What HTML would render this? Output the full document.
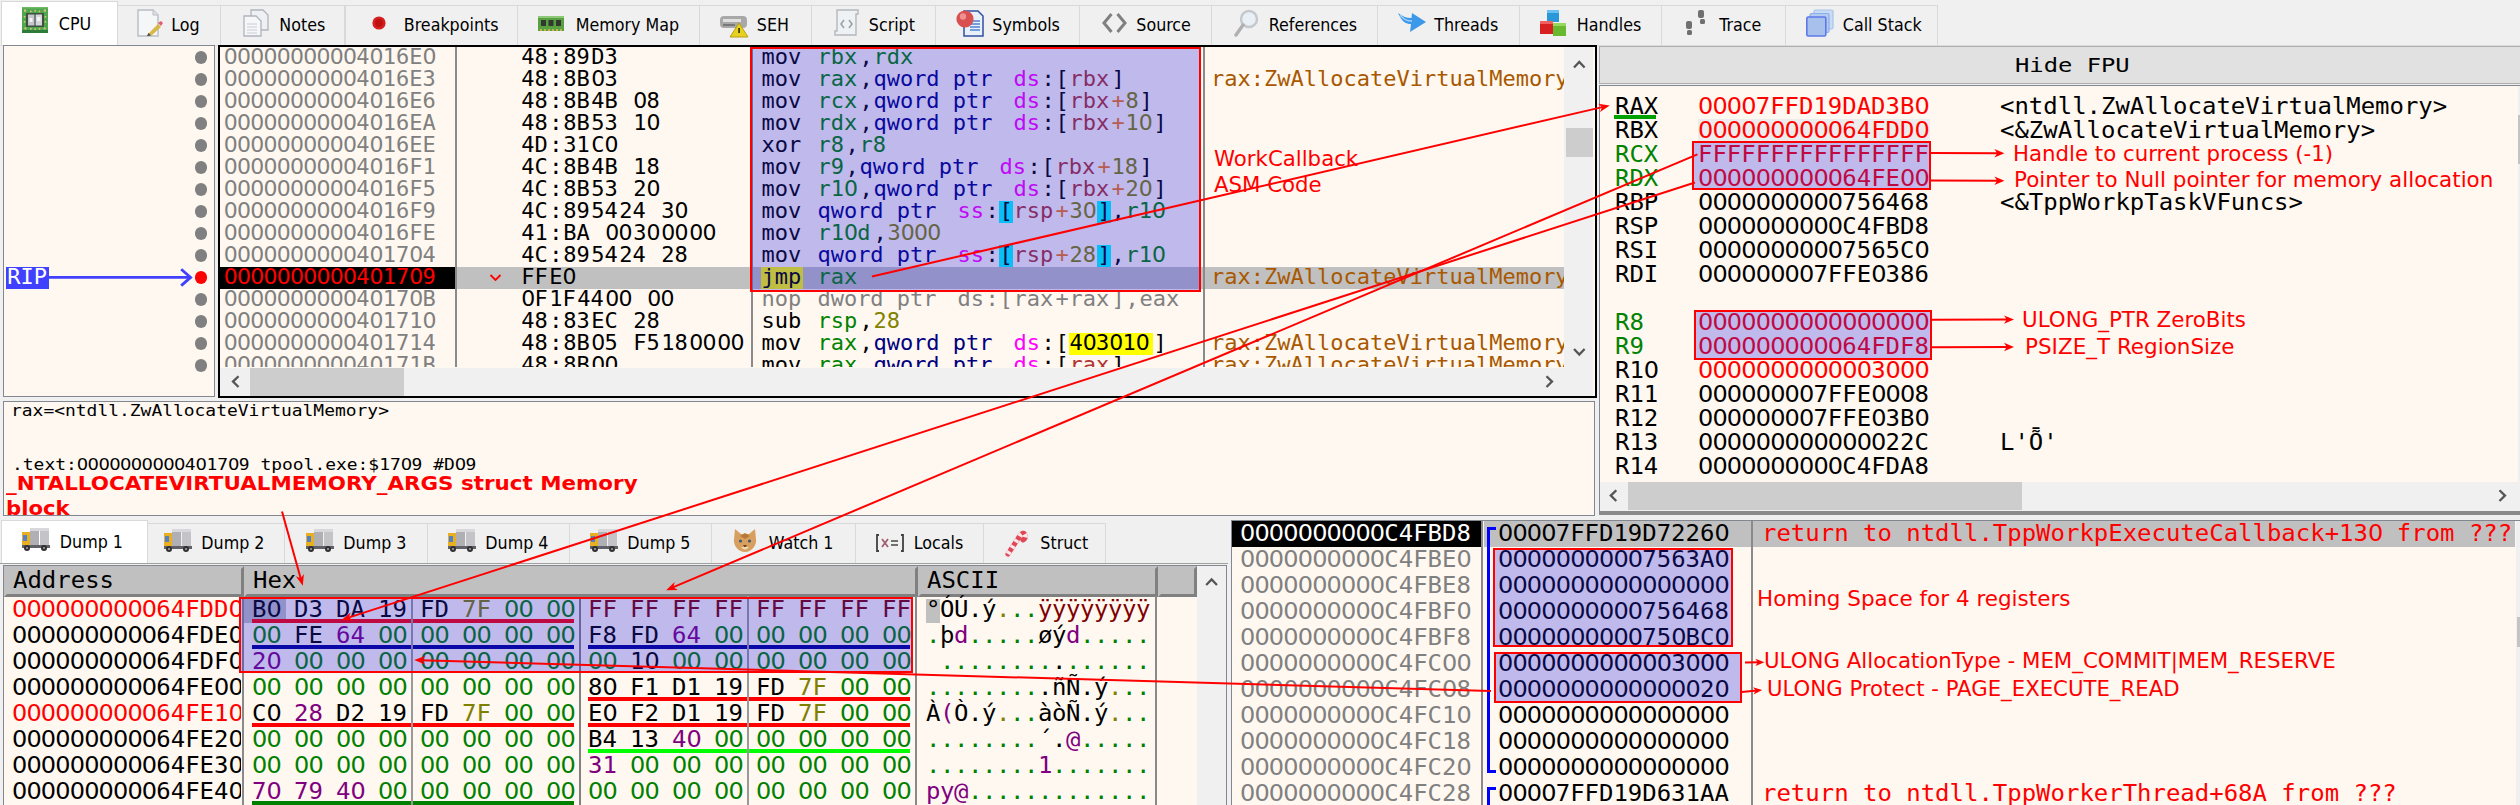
<!DOCTYPE html>
<html lang="en"><head><meta charset="utf-8"><title>x64dbg - tpool.exe</title>
<style>
html,body{margin:0;padding:0;}
body{width:2520px;height:805px;overflow:hidden;position:relative;background:#f0f0f0;}
#root{position:absolute;left:0;top:0;width:2520px;height:805px;overflow:hidden;background:#f0f0f0;}
#root div{position:absolute;box-sizing:border-box;}
.t{position:absolute;white-space:pre;transform-origin:0 50%;display:block;}
.m{font-family:"DejaVu Sans Mono","Liberation Mono",monospace;}
.s{font-family:"DejaVu Sans","Liberation Sans",sans-serif;}
.c{font-family:"DejaVu Sans Condensed","DejaVu Sans","Liberation Sans",sans-serif;font-stretch:condensed;}
.z{font-family:"DejaVu Sans","DejaVu Sans Mono",monospace;letter-spacing:-0.03418em;}
.clip{overflow:hidden;}
svg{position:absolute;left:0;top:0;}
</style></head><body><div id="root">

<div style="left:1.1px;top:1px;width:116.5px;height:44px;background:#ffffff;border:1px solid #d9d9d9;border-bottom:none;"></div>
<span class="t c " style="left:58.8px;top:14.38px;height:21px;line-height:21px;font-size:17.7px;color:#000;">CPU</span>
<svg style="left:22px;top:7px" width="30" height="30" viewBox="0 0 30 30"><rect x="0" y="0" width="26" height="26" rx="1" fill="#4fa64c"/><rect x="0" y="23" width="26" height="3" fill="#2f7c3a"/><rect x="0" y="0" width="26" height="1.5" fill="#6cba62"/><rect x="4" y="6" width="18" height="14" fill="#3e5040"/><rect x="6" y="7.5" width="6.4" height="11" fill="#c4c6cc"/><rect x="13.6" y="7.5" width="6.4" height="11" fill="#d4d6da"/><rect x="7.5" y="11" width="3" height="4" fill="#f4f4f4"/><rect x="15" y="10" width="3.4" height="4" fill="#f4f4f4"/><g fill="#d8c47c"><rect x="2" y="2.5" width="2.2" height="2.2"/><rect x="21.8" y="2.5" width="2.2" height="2.2"/><rect x="2.4" y="20.4" width="2" height="2"/><rect x="21.6" y="20.4" width="2" height="2"/><rect x="8" y="3.6" width="1.6" height="1.6"/><rect x="12.4" y="3" width="1.6" height="1.6"/><rect x="16.6" y="3.6" width="1.6" height="1.6"/><rect x="8" y="21" width="1.6" height="1.6"/><rect x="12.4" y="21.4" width="1.6" height="1.6"/><rect x="16.6" y="21" width="1.6" height="1.6"/><rect x="1.8" y="9" width="1.6" height="1.6"/><rect x="1.8" y="14" width="1.6" height="1.6"/><rect x="22.6" y="9" width="1.6" height="1.6"/><rect x="22.6" y="14" width="1.6" height="1.6"/></g></svg>
<div style="left:116.6px;top:5px;width:104.8px;height:40px;background:#f0f0f0;border:1px solid #d9d9d9;border-bottom:none;"></div>
<span class="t c " style="left:171.3px;top:15.38px;height:21px;line-height:21px;font-size:17.7px;color:#000;">Log</span>
<svg style="left:136px;top:8px" width="30" height="30" viewBox="0 0 30 30"><path d="M2 2H17L22 7V28H2Z" fill="#f4f6f8" stroke="#b8bcc4" stroke-width="1.4"/><path d="M17 2V7H22" fill="#dfe3e8" stroke="#b8bcc4" stroke-width="1"/><path d="M12 26L22 16L25 19L15 28Z" fill="#d8b848"/><path d="M22 15l3-2 2 2-2 3z" fill="#e06070"/><path d="M11 28l1.5-3 2.5 2.5z" fill="#404040"/></svg>
<div style="left:220.4px;top:5px;width:125.1px;height:40px;background:#f0f0f0;border:1px solid #d9d9d9;border-bottom:none;"></div>
<span class="t c " style="left:279.3px;top:15.38px;height:21px;line-height:21px;font-size:17.7px;color:#000;">Notes</span>
<svg style="left:243px;top:8px" width="30" height="30" viewBox="0 0 30 30"><path d="M8 2H20L25 7V22H8Z" fill="#eef0f4" stroke="#b0b4bc" stroke-width="1.3"/><path d="M1 8H13L18 13V28H1Z" fill="#f6f7f9" stroke="#b0b4bc" stroke-width="1.3"/><g stroke="#c8ccd6" stroke-width="1"><path d="M4 16H14M4 19H14M4 22H14M4 25H14"/></g></svg>
<div style="left:344.5px;top:5px;width:173.1px;height:40px;background:#f0f0f0;border:1px solid #d9d9d9;border-bottom:none;"></div>
<span class="t c " style="left:403.8px;top:15.38px;height:21px;line-height:21px;font-size:17.7px;color:#000;">Breakpoints</span>
<svg style="left:370px;top:8px" width="30" height="30" viewBox="0 0 30 30"><circle cx="9" cy="15" r="6.6" fill="#d42020"/><circle cx="9" cy="15" r="4" fill="#c01010"/></svg>
<div style="left:516.6px;top:5px;width:183px;height:40px;background:#f0f0f0;border:1px solid #d9d9d9;border-bottom:none;"></div>
<span class="t c " style="left:575.8px;top:15.38px;height:21px;line-height:21px;font-size:17.7px;color:#000;">Memory Map</span>
<svg style="left:538px;top:8px" width="30" height="30" viewBox="0 0 30 30"><rect x="0" y="8" width="26" height="15" fill="#58a040"/><rect x="0" y="8" width="26" height="2" fill="#8cc878"/><g fill="#303830"><rect x="3" y="12" width="5" height="6"/><rect x="10.5" y="12" width="5" height="6"/><rect x="18" y="12" width="5" height="6"/></g><g fill="#c8b050"><rect x="2" y="21" width="2" height="2"/><rect x="6" y="21" width="2" height="2"/><rect x="10" y="21" width="2" height="2"/><rect x="14" y="21" width="2" height="2"/><rect x="18" y="21" width="2" height="2"/><rect x="22" y="21" width="2" height="2"/></g></svg>
<div style="left:698.6px;top:5px;width:113px;height:40px;background:#f0f0f0;border:1px solid #d9d9d9;border-bottom:none;"></div>
<span class="t c " style="left:756.8px;top:15.38px;height:21px;line-height:21px;font-size:17.7px;color:#000;">SEH</span>
<svg style="left:720px;top:8px" width="30" height="30" viewBox="0 0 30 30"><rect x="0" y="8" width="27" height="12" rx="4" fill="#a8a8a8"/><rect x="3" y="11" width="18" height="3" fill="#e0e0e0"/><rect x="3" y="16" width="12" height="2" fill="#787878"/><path d="M19 15L28 29H10Z" fill="#e8d020" stroke="#b8a010" stroke-width="1"/><rect x="18.2" y="20" width="1.8" height="5" fill="#404000"/></svg>
<div style="left:810.6px;top:5px;width:125px;height:40px;background:#f0f0f0;border:1px solid #d9d9d9;border-bottom:none;"></div>
<span class="t c " style="left:868.8px;top:15.38px;height:21px;line-height:21px;font-size:17.7px;color:#000;">Script</span>
<svg style="left:833px;top:8px" width="30" height="30" viewBox="0 0 30 30"><path d="M4 2H25V6H23V27H2V23H4Z" fill="#eef2f4" stroke="#b4b8bc" stroke-width="1.4"/><g stroke="#9aa4a8" stroke-width="1.6" fill="none"><path d="M11 12L8 16L11 20"/><path d="M16 12L19 16L16 20"/></g></svg>
<div style="left:934.6px;top:5px;width:145px;height:40px;background:#f0f0f0;border:1px solid #d9d9d9;border-bottom:none;"></div>
<span class="t c " style="left:992.3px;top:15.38px;height:21px;line-height:21px;font-size:17.7px;color:#000;">Symbols</span>
<svg style="left:956px;top:8px" width="30" height="30" viewBox="0 0 30 30"><path d="M8 3H22L27 8V28H8Z" fill="#e8f0fc" stroke="#3050a0" stroke-width="1.5"/><g stroke="#5080d0" stroke-width="1.3"><path d="M14 13H24M14 16H24M14 19H24M14 22H24"/></g><circle cx="9" cy="11" r="8.6" fill="#d85050"/><circle cx="7" cy="8.5" r="3.2" fill="#f09090"/></svg>
<div style="left:1078.6px;top:5px;width:133px;height:40px;background:#f0f0f0;border:1px solid #d9d9d9;border-bottom:none;"></div>
<span class="t c " style="left:1136.3px;top:15.38px;height:21px;line-height:21px;font-size:17.7px;color:#000;">Source</span>
<svg style="left:1102px;top:8px" width="30" height="30" viewBox="0 0 30 30"><g stroke="#808080" stroke-width="3" fill="none"><path d="M9.5 6L2 15L9.5 24"/><path d="M15.5 6L23 15L15.5 24"/></g></svg>
<div style="left:1210.6px;top:5px;width:167px;height:40px;background:#f0f0f0;border:1px solid #d9d9d9;border-bottom:none;"></div>
<span class="t c " style="left:1268.8px;top:15.38px;height:21px;line-height:21px;font-size:17.7px;color:#000;">References</span>
<svg style="left:1234px;top:8px" width="30" height="30" viewBox="0 0 30 30"><circle cx="15" cy="11" r="8" fill="#e8f0f6" stroke="#c4c8cc" stroke-width="2.4"/><path d="M9 17L2 27" stroke="#b0b0b0" stroke-width="3.4" stroke-linecap="round"/></svg>
<div style="left:1376.6px;top:5px;width:143px;height:40px;background:#f0f0f0;border:1px solid #d9d9d9;border-bottom:none;"></div>
<span class="t c " style="left:1434.3px;top:15.38px;height:21px;line-height:21px;font-size:17.7px;color:#000;">Threads</span>
<svg style="left:1398px;top:8px" width="30" height="30" viewBox="0 0 30 30"><path d="M0 5C4 14 8 16 13 16L12 24L28 14L14 5L13.5 10C8 10 4 8 0 5Z" fill="#3c98e8"/><path d="M2 7C6 12 9 13 14 13" stroke="#a0d0f8" stroke-width="1.5" fill="none"/></svg>
<div style="left:1518.6px;top:5px;width:143px;height:40px;background:#f0f0f0;border:1px solid #d9d9d9;border-bottom:none;"></div>
<span class="t c " style="left:1576.8px;top:15.38px;height:21px;line-height:21px;font-size:17.7px;color:#000;">Handles</span>
<svg style="left:1540px;top:8px" width="30" height="30" viewBox="0 0 30 30"><rect x="7" y="2" width="12" height="12" fill="#2898d8"/><rect x="7" y="2" width="12" height="3" fill="#68c0f0"/><rect x="0" y="13" width="13" height="13" fill="#d82020"/><rect x="0" y="13" width="13" height="3" fill="#f06060"/><rect x="13" y="15" width="13" height="13" fill="#68b830"/><rect x="13" y="15" width="13" height="3" fill="#98d860"/></svg>
<div style="left:1660.6px;top:5px;width:125px;height:40px;background:#f0f0f0;border:1px solid #d9d9d9;border-bottom:none;"></div>
<span class="t c " style="left:1719.3px;top:15.38px;height:21px;line-height:21px;font-size:17.7px;color:#000;">Trace</span>
<svg style="left:1683px;top:8px" width="30" height="30" viewBox="0 0 30 30"><g fill="#707070"><rect x="15" y="2" width="6" height="8" rx="2"/><rect x="17" y="11" width="5" height="5" rx="1.5"/><rect x="3" y="13" width="6" height="8" rx="2"/><rect x="4" y="22" width="5" height="5" rx="1.5"/></g></svg>
<div style="left:1784.6px;top:5px;width:153px;height:40px;background:#f0f0f0;border:1px solid #d9d9d9;border-bottom:none;"></div>
<span class="t c " style="left:1842.8px;top:15.38px;height:21px;line-height:21px;font-size:17.7px;color:#000;">Call Stack</span>
<svg style="left:1806px;top:8px" width="30" height="30" viewBox="0 0 30 30"><rect x="8" y="2" width="19" height="19" rx="1.5" fill="#c8dcf4" stroke="#a8c4ec" stroke-width="1.2"/><rect x="4" y="5.5" width="19" height="19" rx="1.5" fill="#b4ccf0" stroke="#8cacec" stroke-width="1.2"/><rect x="0.8" y="9" width="19" height="19" rx="1.5" fill="#a8c0ec" stroke="#5c78e8" stroke-width="1.6"/></svg>
<div style="left:0px;top:44.5px;width:2520px;height:1px;background:#dcdcdc;"></div>
<div style="left:2.5px;top:44.8px;width:212.5px;height:352.7px;background:#fff8f0;border:1px solid #828790;"></div>
<div style="left:194.8px;top:51.3px;width:12.4px;height:12.4px;background:#808080;border-radius:50%;"></div>
<div style="left:194.8px;top:73.3px;width:12.4px;height:12.4px;background:#808080;border-radius:50%;"></div>
<div style="left:194.8px;top:95.3px;width:12.4px;height:12.4px;background:#808080;border-radius:50%;"></div>
<div style="left:194.8px;top:117.3px;width:12.4px;height:12.4px;background:#808080;border-radius:50%;"></div>
<div style="left:194.8px;top:139.3px;width:12.4px;height:12.4px;background:#808080;border-radius:50%;"></div>
<div style="left:194.8px;top:161.3px;width:12.4px;height:12.4px;background:#808080;border-radius:50%;"></div>
<div style="left:194.8px;top:183.3px;width:12.4px;height:12.4px;background:#808080;border-radius:50%;"></div>
<div style="left:194.8px;top:205.3px;width:12.4px;height:12.4px;background:#808080;border-radius:50%;"></div>
<div style="left:194.8px;top:227.3px;width:12.4px;height:12.4px;background:#808080;border-radius:50%;"></div>
<div style="left:194.8px;top:249.3px;width:12.4px;height:12.4px;background:#808080;border-radius:50%;"></div>
<div style="left:194.8px;top:271.3px;width:12.4px;height:12.4px;background:#ff0000;border-radius:50%;"></div>
<div style="left:194.8px;top:293.3px;width:12.4px;height:12.4px;background:#808080;border-radius:50%;"></div>
<div style="left:194.8px;top:315.3px;width:12.4px;height:12.4px;background:#808080;border-radius:50%;"></div>
<div style="left:194.8px;top:337.3px;width:12.4px;height:12.4px;background:#808080;border-radius:50%;"></div>
<div style="left:194.8px;top:359.3px;width:12.4px;height:12.4px;background:#808080;border-radius:50%;"></div>
<div style="left:5.5px;top:266.5px;width:43.5px;height:22px;background:#4040ff;"></div>
<span class="t m " style="left:7.2px;top:264.39px;height:26px;line-height:26px;font-size:22px;color:#fff;">RIP</span>
<svg width="220" height="400" viewBox="0 0 220 400"><g stroke="#4040ff" stroke-width="2.8" fill="none"><path d="M49 277.4H190"/><path d="M181.2 269.2L190.6 277.4L181.2 285.6"/></g></svg>
<div style="left:218px;top:45px;width:1379px;height:353.2px;background:#fff8f0;border:2px solid #000;"></div>
<div class="clip" style="left:220px;top:46.5px;width:1344.2px;height:320.4px;">
<span class="t m " style="left:3.8px;top:-0.56px;height:22px;line-height:22px;font-size:22px;color:#808080;"><span class="z">0000000000</span>4<span class="z">0</span>16E<span class="z">0</span></span>
<span class="t m " style="left:301.2px;top:-0.56px;height:22px;line-height:22px;font-size:22px;color:#000000;">48</span>
<span class="t m " style="left:329.2px;top:-0.56px;height:22px;line-height:22px;font-size:22px;color:#000000;">:</span>
<span class="t m " style="left:343.2px;top:-0.56px;height:22px;line-height:22px;font-size:22px;color:#000000;">89</span>
<span class="t m " style="left:371.2px;top:-0.56px;height:22px;line-height:22px;font-size:22px;color:#000000;">D3</span>
<span class="t m " style="left:541.4px;top:-0.56px;height:22px;line-height:22px;font-size:22px;color:#000000;">mov </span>
<span class="t m " style="left:597.4px;top:-0.56px;height:22px;line-height:22px;font-size:22px;color:#008300;">rbx</span>
<span class="t m " style="left:639.4px;top:-0.56px;height:22px;line-height:22px;font-size:22px;color:#000000;">,</span>
<span class="t m " style="left:653.4px;top:-0.56px;height:22px;line-height:22px;font-size:22px;color:#008300;">rdx</span>
<span class="t m " style="left:3.8px;top:21.44px;height:22px;line-height:22px;font-size:22px;color:#808080;"><span class="z">0000000000</span>4<span class="z">0</span>16E3</span>
<span class="t m " style="left:301.2px;top:21.44px;height:22px;line-height:22px;font-size:22px;color:#000000;">48</span>
<span class="t m " style="left:329.2px;top:21.44px;height:22px;line-height:22px;font-size:22px;color:#000000;">:</span>
<span class="t m " style="left:343.2px;top:21.44px;height:22px;line-height:22px;font-size:22px;color:#000000;">8B</span>
<span class="t m " style="left:371.2px;top:21.44px;height:22px;line-height:22px;font-size:22px;color:#000000;"><span class="z">0</span>3</span>
<span class="t m " style="left:541.4px;top:21.44px;height:22px;line-height:22px;font-size:22px;color:#000000;">mov </span>
<span class="t m " style="left:597.4px;top:21.44px;height:22px;line-height:22px;font-size:22px;color:#008300;">rax</span>
<span class="t m " style="left:639.4px;top:21.44px;height:22px;line-height:22px;font-size:22px;color:#000000;">,</span>
<span class="t m " style="left:653.4px;top:21.44px;height:22px;line-height:22px;font-size:22px;color:#000080;">qword ptr</span>
<span class="t m " style="left:793.4px;top:21.44px;height:22px;line-height:22px;font-size:22px;color:#ff00ff;">ds</span>
<span class="t m " style="left:821.4px;top:21.44px;height:22px;line-height:22px;font-size:22px;color:#000000;">:</span>
<span class="t m " style="left:835.4px;top:21.44px;height:22px;line-height:22px;font-size:22px;color:#000000;">[</span>
<span class="t m " style="left:849.4px;top:21.44px;height:22px;line-height:22px;font-size:22px;color:#b03434;">rbx</span>
<span class="t m " style="left:891.4px;top:21.44px;height:22px;line-height:22px;font-size:22px;color:#000000;">]</span>
<span class="t m " style="left:991px;top:21.44px;height:22px;line-height:22px;font-size:22px;color:#a85800;">rax:ZwAllocateVirtualMemory</span>
<span class="t m " style="left:3.8px;top:43.44px;height:22px;line-height:22px;font-size:22px;color:#808080;"><span class="z">0000000000</span>4<span class="z">0</span>16E6</span>
<span class="t m " style="left:301.2px;top:43.44px;height:22px;line-height:22px;font-size:22px;color:#000000;">48</span>
<span class="t m " style="left:329.2px;top:43.44px;height:22px;line-height:22px;font-size:22px;color:#000000;">:</span>
<span class="t m " style="left:343.2px;top:43.44px;height:22px;line-height:22px;font-size:22px;color:#000000;">8B</span>
<span class="t m " style="left:371.2px;top:43.44px;height:22px;line-height:22px;font-size:22px;color:#000000;">4B</span>
<span class="t m " style="left:413.2px;top:43.44px;height:22px;line-height:22px;font-size:22px;color:#000000;"><span class="z">0</span>8</span>
<span class="t m " style="left:541.4px;top:43.44px;height:22px;line-height:22px;font-size:22px;color:#000000;">mov </span>
<span class="t m " style="left:597.4px;top:43.44px;height:22px;line-height:22px;font-size:22px;color:#008300;">rcx</span>
<span class="t m " style="left:639.4px;top:43.44px;height:22px;line-height:22px;font-size:22px;color:#000000;">,</span>
<span class="t m " style="left:653.4px;top:43.44px;height:22px;line-height:22px;font-size:22px;color:#000080;">qword ptr</span>
<span class="t m " style="left:793.4px;top:43.44px;height:22px;line-height:22px;font-size:22px;color:#ff00ff;">ds</span>
<span class="t m " style="left:821.4px;top:43.44px;height:22px;line-height:22px;font-size:22px;color:#000000;">:</span>
<span class="t m " style="left:835.4px;top:43.44px;height:22px;line-height:22px;font-size:22px;color:#000000;">[</span>
<span class="t m " style="left:849.4px;top:43.44px;height:22px;line-height:22px;font-size:22px;color:#b03434;">rbx</span>
<span class="t m " style="left:891.4px;top:43.44px;height:22px;line-height:22px;font-size:22px;color:#f27711;">+</span>
<span class="t m " style="left:905.4px;top:43.44px;height:22px;line-height:22px;font-size:22px;color:#828200;">8</span>
<span class="t m " style="left:919.4px;top:43.44px;height:22px;line-height:22px;font-size:22px;color:#000000;">]</span>
<span class="t m " style="left:3.8px;top:65.44px;height:22px;line-height:22px;font-size:22px;color:#808080;"><span class="z">0000000000</span>4<span class="z">0</span>16EA</span>
<span class="t m " style="left:301.2px;top:65.44px;height:22px;line-height:22px;font-size:22px;color:#000000;">48</span>
<span class="t m " style="left:329.2px;top:65.44px;height:22px;line-height:22px;font-size:22px;color:#000000;">:</span>
<span class="t m " style="left:343.2px;top:65.44px;height:22px;line-height:22px;font-size:22px;color:#000000;">8B</span>
<span class="t m " style="left:371.2px;top:65.44px;height:22px;line-height:22px;font-size:22px;color:#000000;">53</span>
<span class="t m " style="left:413.2px;top:65.44px;height:22px;line-height:22px;font-size:22px;color:#000000;">1<span class="z">0</span></span>
<span class="t m " style="left:541.4px;top:65.44px;height:22px;line-height:22px;font-size:22px;color:#000000;">mov </span>
<span class="t m " style="left:597.4px;top:65.44px;height:22px;line-height:22px;font-size:22px;color:#008300;">rdx</span>
<span class="t m " style="left:639.4px;top:65.44px;height:22px;line-height:22px;font-size:22px;color:#000000;">,</span>
<span class="t m " style="left:653.4px;top:65.44px;height:22px;line-height:22px;font-size:22px;color:#000080;">qword ptr</span>
<span class="t m " style="left:793.4px;top:65.44px;height:22px;line-height:22px;font-size:22px;color:#ff00ff;">ds</span>
<span class="t m " style="left:821.4px;top:65.44px;height:22px;line-height:22px;font-size:22px;color:#000000;">:</span>
<span class="t m " style="left:835.4px;top:65.44px;height:22px;line-height:22px;font-size:22px;color:#000000;">[</span>
<span class="t m " style="left:849.4px;top:65.44px;height:22px;line-height:22px;font-size:22px;color:#b03434;">rbx</span>
<span class="t m " style="left:891.4px;top:65.44px;height:22px;line-height:22px;font-size:22px;color:#f27711;">+</span>
<span class="t m " style="left:905.4px;top:65.44px;height:22px;line-height:22px;font-size:22px;color:#828200;">1<span class="z">0</span></span>
<span class="t m " style="left:933.4px;top:65.44px;height:22px;line-height:22px;font-size:22px;color:#000000;">]</span>
<span class="t m " style="left:3.8px;top:87.44px;height:22px;line-height:22px;font-size:22px;color:#808080;"><span class="z">0000000000</span>4<span class="z">0</span>16EE</span>
<span class="t m " style="left:301.2px;top:87.44px;height:22px;line-height:22px;font-size:22px;color:#000000;">4D</span>
<span class="t m " style="left:329.2px;top:87.44px;height:22px;line-height:22px;font-size:22px;color:#000000;">:</span>
<span class="t m " style="left:343.2px;top:87.44px;height:22px;line-height:22px;font-size:22px;color:#000000;">31</span>
<span class="t m " style="left:371.2px;top:87.44px;height:22px;line-height:22px;font-size:22px;color:#000000;">C<span class="z">0</span></span>
<span class="t m " style="left:541.4px;top:87.44px;height:22px;line-height:22px;font-size:22px;color:#000000;">xor </span>
<span class="t m " style="left:597.4px;top:87.44px;height:22px;line-height:22px;font-size:22px;color:#008300;">r8</span>
<span class="t m " style="left:625.4px;top:87.44px;height:22px;line-height:22px;font-size:22px;color:#000000;">,</span>
<span class="t m " style="left:639.4px;top:87.44px;height:22px;line-height:22px;font-size:22px;color:#008300;">r8</span>
<span class="t m " style="left:3.8px;top:109.44px;height:22px;line-height:22px;font-size:22px;color:#808080;"><span class="z">0000000000</span>4<span class="z">0</span>16F1</span>
<span class="t m " style="left:301.2px;top:109.44px;height:22px;line-height:22px;font-size:22px;color:#000000;">4C</span>
<span class="t m " style="left:329.2px;top:109.44px;height:22px;line-height:22px;font-size:22px;color:#000000;">:</span>
<span class="t m " style="left:343.2px;top:109.44px;height:22px;line-height:22px;font-size:22px;color:#000000;">8B</span>
<span class="t m " style="left:371.2px;top:109.44px;height:22px;line-height:22px;font-size:22px;color:#000000;">4B</span>
<span class="t m " style="left:413.2px;top:109.44px;height:22px;line-height:22px;font-size:22px;color:#000000;">18</span>
<span class="t m " style="left:541.4px;top:109.44px;height:22px;line-height:22px;font-size:22px;color:#000000;">mov </span>
<span class="t m " style="left:597.4px;top:109.44px;height:22px;line-height:22px;font-size:22px;color:#008300;">r9</span>
<span class="t m " style="left:625.4px;top:109.44px;height:22px;line-height:22px;font-size:22px;color:#000000;">,</span>
<span class="t m " style="left:639.4px;top:109.44px;height:22px;line-height:22px;font-size:22px;color:#000080;">qword ptr</span>
<span class="t m " style="left:779.4px;top:109.44px;height:22px;line-height:22px;font-size:22px;color:#ff00ff;">ds</span>
<span class="t m " style="left:807.4px;top:109.44px;height:22px;line-height:22px;font-size:22px;color:#000000;">:</span>
<span class="t m " style="left:821.4px;top:109.44px;height:22px;line-height:22px;font-size:22px;color:#000000;">[</span>
<span class="t m " style="left:835.4px;top:109.44px;height:22px;line-height:22px;font-size:22px;color:#b03434;">rbx</span>
<span class="t m " style="left:877.4px;top:109.44px;height:22px;line-height:22px;font-size:22px;color:#f27711;">+</span>
<span class="t m " style="left:891.4px;top:109.44px;height:22px;line-height:22px;font-size:22px;color:#828200;">18</span>
<span class="t m " style="left:919.4px;top:109.44px;height:22px;line-height:22px;font-size:22px;color:#000000;">]</span>
<span class="t m " style="left:3.8px;top:131.44px;height:22px;line-height:22px;font-size:22px;color:#808080;"><span class="z">0000000000</span>4<span class="z">0</span>16F5</span>
<span class="t m " style="left:301.2px;top:131.44px;height:22px;line-height:22px;font-size:22px;color:#000000;">4C</span>
<span class="t m " style="left:329.2px;top:131.44px;height:22px;line-height:22px;font-size:22px;color:#000000;">:</span>
<span class="t m " style="left:343.2px;top:131.44px;height:22px;line-height:22px;font-size:22px;color:#000000;">8B</span>
<span class="t m " style="left:371.2px;top:131.44px;height:22px;line-height:22px;font-size:22px;color:#000000;">53</span>
<span class="t m " style="left:413.2px;top:131.44px;height:22px;line-height:22px;font-size:22px;color:#000000;">2<span class="z">0</span></span>
<span class="t m " style="left:541.4px;top:131.44px;height:22px;line-height:22px;font-size:22px;color:#000000;">mov </span>
<span class="t m " style="left:597.4px;top:131.44px;height:22px;line-height:22px;font-size:22px;color:#008300;">r1<span class="z">0</span></span>
<span class="t m " style="left:639.4px;top:131.44px;height:22px;line-height:22px;font-size:22px;color:#000000;">,</span>
<span class="t m " style="left:653.4px;top:131.44px;height:22px;line-height:22px;font-size:22px;color:#000080;">qword ptr</span>
<span class="t m " style="left:793.4px;top:131.44px;height:22px;line-height:22px;font-size:22px;color:#ff00ff;">ds</span>
<span class="t m " style="left:821.4px;top:131.44px;height:22px;line-height:22px;font-size:22px;color:#000000;">:</span>
<span class="t m " style="left:835.4px;top:131.44px;height:22px;line-height:22px;font-size:22px;color:#000000;">[</span>
<span class="t m " style="left:849.4px;top:131.44px;height:22px;line-height:22px;font-size:22px;color:#b03434;">rbx</span>
<span class="t m " style="left:891.4px;top:131.44px;height:22px;line-height:22px;font-size:22px;color:#f27711;">+</span>
<span class="t m " style="left:905.4px;top:131.44px;height:22px;line-height:22px;font-size:22px;color:#828200;">2<span class="z">0</span></span>
<span class="t m " style="left:933.4px;top:131.44px;height:22px;line-height:22px;font-size:22px;color:#000000;">]</span>
<span class="t m " style="left:3.8px;top:153.44px;height:22px;line-height:22px;font-size:22px;color:#808080;"><span class="z">0000000000</span>4<span class="z">0</span>16F9</span>
<span class="t m " style="left:301.2px;top:153.44px;height:22px;line-height:22px;font-size:22px;color:#000000;">4C</span>
<span class="t m " style="left:329.2px;top:153.44px;height:22px;line-height:22px;font-size:22px;color:#000000;">:</span>
<span class="t m " style="left:343.2px;top:153.44px;height:22px;line-height:22px;font-size:22px;color:#000000;">89</span>
<span class="t m " style="left:371.2px;top:153.44px;height:22px;line-height:22px;font-size:22px;color:#000000;">54</span>
<span class="t m " style="left:399.2px;top:153.44px;height:22px;line-height:22px;font-size:22px;color:#000000;">24</span>
<span class="t m " style="left:441.2px;top:153.44px;height:22px;line-height:22px;font-size:22px;color:#000000;">3<span class="z">0</span></span>
<span class="t m " style="left:541.4px;top:153.44px;height:22px;line-height:22px;font-size:22px;color:#000000;">mov </span>
<span class="t m " style="left:597.4px;top:153.44px;height:22px;line-height:22px;font-size:22px;color:#000080;">qword ptr</span>
<span class="t m " style="left:737.4px;top:153.44px;height:22px;line-height:22px;font-size:22px;color:#ff00ff;">ss</span>
<span class="t m " style="left:765.4px;top:153.44px;height:22px;line-height:22px;font-size:22px;color:#000000;">:</span>
<div style="left:779.4px;top:154px;width:14px;height:22px;background:#00ffff;"></div>
<span class="t m " style="left:779.4px;top:153.44px;height:22px;line-height:22px;font-size:22px;color:#000000;">[</span>
<span class="t m " style="left:793.4px;top:153.44px;height:22px;line-height:22px;font-size:22px;color:#b03434;">rsp</span>
<span class="t m " style="left:835.4px;top:153.44px;height:22px;line-height:22px;font-size:22px;color:#f27711;">+</span>
<span class="t m " style="left:849.4px;top:153.44px;height:22px;line-height:22px;font-size:22px;color:#828200;">3<span class="z">0</span></span>
<div style="left:877.4px;top:154px;width:14px;height:22px;background:#00ffff;"></div>
<span class="t m " style="left:877.4px;top:153.44px;height:22px;line-height:22px;font-size:22px;color:#000000;">]</span>
<span class="t m " style="left:891.4px;top:153.44px;height:22px;line-height:22px;font-size:22px;color:#000000;">,</span>
<span class="t m " style="left:905.4px;top:153.44px;height:22px;line-height:22px;font-size:22px;color:#008300;">r1<span class="z">0</span></span>
<span class="t m " style="left:3.8px;top:175.44px;height:22px;line-height:22px;font-size:22px;color:#808080;"><span class="z">0000000000</span>4<span class="z">0</span>16FE</span>
<span class="t m " style="left:301.2px;top:175.44px;height:22px;line-height:22px;font-size:22px;color:#000000;">41</span>
<span class="t m " style="left:329.2px;top:175.44px;height:22px;line-height:22px;font-size:22px;color:#000000;">:</span>
<span class="t m " style="left:343.2px;top:175.44px;height:22px;line-height:22px;font-size:22px;color:#000000;">BA</span>
<span class="t m " style="left:385.2px;top:175.44px;height:22px;line-height:22px;font-size:22px;color:#000000;"><span class="z">00</span></span>
<span class="t m " style="left:413.2px;top:175.44px;height:22px;line-height:22px;font-size:22px;color:#000000;">3<span class="z">0</span></span>
<span class="t m " style="left:441.2px;top:175.44px;height:22px;line-height:22px;font-size:22px;color:#000000;"><span class="z">00</span></span>
<span class="t m " style="left:469.2px;top:175.44px;height:22px;line-height:22px;font-size:22px;color:#000000;"><span class="z">00</span></span>
<span class="t m " style="left:541.4px;top:175.44px;height:22px;line-height:22px;font-size:22px;color:#000000;">mov </span>
<span class="t m " style="left:597.4px;top:175.44px;height:22px;line-height:22px;font-size:22px;color:#008300;">r1<span class="z">0</span>d</span>
<span class="t m " style="left:653.4px;top:175.44px;height:22px;line-height:22px;font-size:22px;color:#000000;">,</span>
<span class="t m " style="left:667.4px;top:175.44px;height:22px;line-height:22px;font-size:22px;color:#828200;">3<span class="z">000</span></span>
<span class="t m " style="left:3.8px;top:197.44px;height:22px;line-height:22px;font-size:22px;color:#808080;"><span class="z">0000000000</span>4<span class="z">0</span>17<span class="z">0</span>4</span>
<span class="t m " style="left:301.2px;top:197.44px;height:22px;line-height:22px;font-size:22px;color:#000000;">4C</span>
<span class="t m " style="left:329.2px;top:197.44px;height:22px;line-height:22px;font-size:22px;color:#000000;">:</span>
<span class="t m " style="left:343.2px;top:197.44px;height:22px;line-height:22px;font-size:22px;color:#000000;">89</span>
<span class="t m " style="left:371.2px;top:197.44px;height:22px;line-height:22px;font-size:22px;color:#000000;">54</span>
<span class="t m " style="left:399.2px;top:197.44px;height:22px;line-height:22px;font-size:22px;color:#000000;">24</span>
<span class="t m " style="left:441.2px;top:197.44px;height:22px;line-height:22px;font-size:22px;color:#000000;">28</span>
<span class="t m " style="left:541.4px;top:197.44px;height:22px;line-height:22px;font-size:22px;color:#000000;">mov </span>
<span class="t m " style="left:597.4px;top:197.44px;height:22px;line-height:22px;font-size:22px;color:#000080;">qword ptr</span>
<span class="t m " style="left:737.4px;top:197.44px;height:22px;line-height:22px;font-size:22px;color:#ff00ff;">ss</span>
<span class="t m " style="left:765.4px;top:197.44px;height:22px;line-height:22px;font-size:22px;color:#000000;">:</span>
<div style="left:779.4px;top:198px;width:14px;height:22px;background:#00ffff;"></div>
<span class="t m " style="left:779.4px;top:197.44px;height:22px;line-height:22px;font-size:22px;color:#000000;">[</span>
<span class="t m " style="left:793.4px;top:197.44px;height:22px;line-height:22px;font-size:22px;color:#b03434;">rsp</span>
<span class="t m " style="left:835.4px;top:197.44px;height:22px;line-height:22px;font-size:22px;color:#f27711;">+</span>
<span class="t m " style="left:849.4px;top:197.44px;height:22px;line-height:22px;font-size:22px;color:#828200;">28</span>
<div style="left:877.4px;top:198px;width:14px;height:22px;background:#00ffff;"></div>
<span class="t m " style="left:877.4px;top:197.44px;height:22px;line-height:22px;font-size:22px;color:#000000;">]</span>
<span class="t m " style="left:891.4px;top:197.44px;height:22px;line-height:22px;font-size:22px;color:#000000;">,</span>
<span class="t m " style="left:905.4px;top:197.44px;height:22px;line-height:22px;font-size:22px;color:#008300;">r1<span class="z">0</span></span>
<div style="left:0px;top:220px;width:236.5px;height:22px;background:#000;"></div>
<div style="left:236.5px;top:220px;width:1108.9px;height:22px;background:#c0c0c0;"></div>
<span class="t m " style="left:3.8px;top:219.44px;height:22px;line-height:22px;font-size:22px;color:#ff0000;"><span class="z">0000000000</span>4<span class="z">0</span>17<span class="z">0</span>9</span>
<span class="t m " style="left:301.2px;top:219.44px;height:22px;line-height:22px;font-size:22px;color:#000000;">FF</span>
<span class="t m " style="left:329.2px;top:219.44px;height:22px;line-height:22px;font-size:22px;color:#000000;">E<span class="z">0</span></span>
<svg style="left:269px;top:226px" width="14" height="10" viewBox="0 0 14 10"><path d="M1.5 2L6.5 7L11.5 2" stroke="#ff0000" stroke-width="1.8" fill="none"/></svg>
<div style="left:541.4px;top:220px;width:42px;height:22px;background:#ffff00;"></div>
<span class="t m " style="left:541.4px;top:219.44px;height:22px;line-height:22px;font-size:22px;color:#000000;">jmp</span>
<span class="t m " style="left:597.4px;top:219.44px;height:22px;line-height:22px;font-size:22px;color:#008300;">rax</span>
<span class="t m " style="left:991px;top:219.44px;height:22px;line-height:22px;font-size:22px;color:#a85800;">rax:ZwAllocateVirtualMemory</span>
<span class="t m " style="left:3.8px;top:241.44px;height:22px;line-height:22px;font-size:22px;color:#808080;"><span class="z">0000000000</span>4<span class="z">0</span>17<span class="z">0</span>B</span>
<span class="t m " style="left:301.2px;top:241.44px;height:22px;line-height:22px;font-size:22px;color:#000000;"><span class="z">0</span>F</span>
<span class="t m " style="left:329.2px;top:241.44px;height:22px;line-height:22px;font-size:22px;color:#000000;">1F</span>
<span class="t m " style="left:357.2px;top:241.44px;height:22px;line-height:22px;font-size:22px;color:#000000;">44</span>
<span class="t m " style="left:385.2px;top:241.44px;height:22px;line-height:22px;font-size:22px;color:#000000;"><span class="z">00</span></span>
<span class="t m " style="left:427.2px;top:241.44px;height:22px;line-height:22px;font-size:22px;color:#000000;"><span class="z">00</span></span>
<span class="t m " style="left:541.4px;top:241.44px;height:22px;line-height:22px;font-size:22px;color:#808080;">nop </span>
<span class="t m " style="left:597.4px;top:241.44px;height:22px;line-height:22px;font-size:22px;color:#808080;">dword ptr</span>
<span class="t m " style="left:737.4px;top:241.44px;height:22px;line-height:22px;font-size:22px;color:#808080;">ds</span>
<span class="t m " style="left:765.4px;top:241.44px;height:22px;line-height:22px;font-size:22px;color:#808080;">:</span>
<span class="t m " style="left:779.4px;top:241.44px;height:22px;line-height:22px;font-size:22px;color:#808080;">[</span>
<span class="t m " style="left:793.4px;top:241.44px;height:22px;line-height:22px;font-size:22px;color:#808080;">rax</span>
<span class="t m " style="left:835.4px;top:241.44px;height:22px;line-height:22px;font-size:22px;color:#808080;">+</span>
<span class="t m " style="left:849.4px;top:241.44px;height:22px;line-height:22px;font-size:22px;color:#808080;">rax</span>
<span class="t m " style="left:891.4px;top:241.44px;height:22px;line-height:22px;font-size:22px;color:#808080;">]</span>
<span class="t m " style="left:905.4px;top:241.44px;height:22px;line-height:22px;font-size:22px;color:#808080;">,</span>
<span class="t m " style="left:919.4px;top:241.44px;height:22px;line-height:22px;font-size:22px;color:#808080;">eax</span>
<span class="t m " style="left:3.8px;top:263.44px;height:22px;line-height:22px;font-size:22px;color:#808080;"><span class="z">0000000000</span>4<span class="z">0</span>171<span class="z">0</span></span>
<span class="t m " style="left:301.2px;top:263.44px;height:22px;line-height:22px;font-size:22px;color:#000000;">48</span>
<span class="t m " style="left:329.2px;top:263.44px;height:22px;line-height:22px;font-size:22px;color:#000000;">:</span>
<span class="t m " style="left:343.2px;top:263.44px;height:22px;line-height:22px;font-size:22px;color:#000000;">83</span>
<span class="t m " style="left:371.2px;top:263.44px;height:22px;line-height:22px;font-size:22px;color:#000000;">EC</span>
<span class="t m " style="left:413.2px;top:263.44px;height:22px;line-height:22px;font-size:22px;color:#000000;">28</span>
<span class="t m " style="left:541.4px;top:263.44px;height:22px;line-height:22px;font-size:22px;color:#000000;">sub </span>
<span class="t m " style="left:597.4px;top:263.44px;height:22px;line-height:22px;font-size:22px;color:#008300;">rsp</span>
<span class="t m " style="left:639.4px;top:263.44px;height:22px;line-height:22px;font-size:22px;color:#000000;">,</span>
<span class="t m " style="left:653.4px;top:263.44px;height:22px;line-height:22px;font-size:22px;color:#828200;">28</span>
<span class="t m " style="left:3.8px;top:285.44px;height:22px;line-height:22px;font-size:22px;color:#808080;"><span class="z">0000000000</span>4<span class="z">0</span>1714</span>
<span class="t m " style="left:301.2px;top:285.44px;height:22px;line-height:22px;font-size:22px;color:#000000;">48</span>
<span class="t m " style="left:329.2px;top:285.44px;height:22px;line-height:22px;font-size:22px;color:#000000;">:</span>
<span class="t m " style="left:343.2px;top:285.44px;height:22px;line-height:22px;font-size:22px;color:#000000;">8B</span>
<span class="t m " style="left:371.2px;top:285.44px;height:22px;line-height:22px;font-size:22px;color:#000000;"><span class="z">0</span>5</span>
<span class="t m " style="left:413.2px;top:285.44px;height:22px;line-height:22px;font-size:22px;color:#000000;">F5</span>
<span class="t m " style="left:441.2px;top:285.44px;height:22px;line-height:22px;font-size:22px;color:#000000;">18</span>
<span class="t m " style="left:469.2px;top:285.44px;height:22px;line-height:22px;font-size:22px;color:#000000;"><span class="z">00</span></span>
<span class="t m " style="left:497.2px;top:285.44px;height:22px;line-height:22px;font-size:22px;color:#000000;"><span class="z">00</span></span>
<span class="t m " style="left:541.4px;top:285.44px;height:22px;line-height:22px;font-size:22px;color:#000000;">mov </span>
<span class="t m " style="left:597.4px;top:285.44px;height:22px;line-height:22px;font-size:22px;color:#008300;">rax</span>
<span class="t m " style="left:639.4px;top:285.44px;height:22px;line-height:22px;font-size:22px;color:#000000;">,</span>
<span class="t m " style="left:653.4px;top:285.44px;height:22px;line-height:22px;font-size:22px;color:#000080;">qword ptr</span>
<span class="t m " style="left:793.4px;top:285.44px;height:22px;line-height:22px;font-size:22px;color:#ff00ff;">ds</span>
<span class="t m " style="left:821.4px;top:285.44px;height:22px;line-height:22px;font-size:22px;color:#000000;">:</span>
<span class="t m " style="left:835.4px;top:285.44px;height:22px;line-height:22px;font-size:22px;color:#000000;">[</span>
<div style="left:849.4px;top:286px;width:84px;height:22px;background:#ffff00;"></div>
<span class="t m " style="left:849.4px;top:285.44px;height:22px;line-height:22px;font-size:22px;color:#000000;">4<span class="z">0</span>3<span class="z">0</span>1<span class="z">0</span></span>
<span class="t m " style="left:933.4px;top:285.44px;height:22px;line-height:22px;font-size:22px;color:#000000;">]</span>
<span class="t m " style="left:991px;top:285.44px;height:22px;line-height:22px;font-size:22px;color:#a85800;">rax:ZwAllocateVirtualMemory</span>
<span class="t m " style="left:3.8px;top:307.44px;height:22px;line-height:22px;font-size:22px;color:#808080;"><span class="z">0000000000</span>4<span class="z">0</span>171B</span>
<span class="t m " style="left:301.2px;top:307.44px;height:22px;line-height:22px;font-size:22px;color:#000000;">48</span>
<span class="t m " style="left:329.2px;top:307.44px;height:22px;line-height:22px;font-size:22px;color:#000000;">:</span>
<span class="t m " style="left:343.2px;top:307.44px;height:22px;line-height:22px;font-size:22px;color:#000000;">8B</span>
<span class="t m " style="left:371.2px;top:307.44px;height:22px;line-height:22px;font-size:22px;color:#000000;"><span class="z">00</span></span>
<span class="t m " style="left:541.4px;top:307.44px;height:22px;line-height:22px;font-size:22px;color:#000000;">mov </span>
<span class="t m " style="left:597.4px;top:307.44px;height:22px;line-height:22px;font-size:22px;color:#008300;">rax</span>
<span class="t m " style="left:639.4px;top:307.44px;height:22px;line-height:22px;font-size:22px;color:#000000;">,</span>
<span class="t m " style="left:653.4px;top:307.44px;height:22px;line-height:22px;font-size:22px;color:#000080;">qword ptr</span>
<span class="t m " style="left:793.4px;top:307.44px;height:22px;line-height:22px;font-size:22px;color:#ff00ff;">ds</span>
<span class="t m " style="left:821.4px;top:307.44px;height:22px;line-height:22px;font-size:22px;color:#000000;">:</span>
<span class="t m " style="left:835.4px;top:307.44px;height:22px;line-height:22px;font-size:22px;color:#000000;">[</span>
<span class="t m " style="left:849.4px;top:307.44px;height:22px;line-height:22px;font-size:22px;color:#b03434;">rax</span>
<span class="t m " style="left:891.4px;top:307.44px;height:22px;line-height:22px;font-size:22px;color:#000000;">]</span>
<span class="t m " style="left:991px;top:307.44px;height:22px;line-height:22px;font-size:22px;color:#a85800;">rax:ZwAllocateVirtualMemory</span>
<div style="left:235px;top:0px;width:2px;height:330px;background:#8a8a8a;"></div>
<div style="left:531px;top:0px;width:2px;height:330px;background:#8a8a8a;"></div>
<div style="left:983px;top:0px;width:2px;height:330px;background:#8a8a8a;"></div>
</div>
<div style="left:1564.4px;top:47px;width:28.8px;height:320.8px;background:#f0f0f0;"></div>
<div style="left:1566px;top:128px;width:26.6px;height:28.5px;background:#cdcdcd;"></div>
<div style="left:220px;top:367.8px;width:1373.2px;height:28.4px;background:#f0f0f0;"></div>
<div style="left:250px;top:368.4px;width:154px;height:27.4px;background:#cdcdcd;"></div>
<svg width="2520" height="805" viewBox="0 0 2520 805" style="pointer-events:none"><g stroke="#555" stroke-width="2.3" fill="none"><path d="M1574 67.5L1579.3 62L1584.6 67.5"/><path d="M1574 349L1579.3 354.5L1584.6 349"/><path d="M238.5 376.2L233 381.6L238.5 387"/><path d="M1546.5 376.2L1552 381.6L1546.5 387"/><path d="M1616.3 490.2L1610.8 495.6L1616.3 501"/><path d="M2499.5 490.2L2505 495.6L2499.5 501"/></g></svg>
<div style="left:2.5px;top:401px;width:1592.5px;height:114.6px;background:#fff8f0;border:1px solid #828790;"></div>
<span class="t m " style="left:11.2px;top:401.16px;height:19px;line-height:19px;font-size:16px;color:#000000;transform:scaleX(1.121);">rax=&lt;ntdll.ZwAllocateVirtualMemory&gt;</span>
<span class="t m " style="left:12px;top:455.16px;height:19px;line-height:19px;font-size:16px;color:#000000;transform:scaleX(1.121);">.text:<span class="z">0000000000</span>4<span class="z">0</span>17<span class="z">0</span>9 tpool.exe:$17<span class="z">0</span>9 #D<span class="z">0</span>9</span>
<div style="left:1598.5px;top:46px;width:925px;height:37.5px;background:#e1e1e1;border:1px solid #adadad;"></div>
<span class="t m " style="left:2015.2px;top:53.08px;height:24px;line-height:24px;font-size:20px;color:#000000;transform:scaleX(1.19);">Hide FPU</span>
<div style="left:1598.5px;top:85px;width:925px;height:430px;background:#fff8f0;border:1px solid #828790;"></div>
<div class="clip" style="left:1599.5px;top:86px;width:920.5px;height:395.5px;">
<span class="t m " style="left:15.1px;top:8.12px;height:24px;line-height:24px;font-size:22.5px;color:#000000;transform:scaleX(1.065);">RAX</span>
<span class="t m " style="left:98.1px;top:8.12px;height:24px;line-height:24px;font-size:22.5px;color:#ff0000;transform:scaleX(1.065);"><span class="z">0000</span>7FFD19DAD3B<span class="z">0</span></span>
<span class="t m " style="left:400.1px;top:8.12px;height:24px;line-height:24px;font-size:22.5px;color:#000000;transform:scaleX(1.065);">&lt;ntdll.ZwAllocateVirtualMemory&gt;</span>
<div style="left:98.5px;top:33px;width:232px;height:22px;background:#ececec;"></div>
<span class="t m " style="left:15.1px;top:32.12px;height:24px;line-height:24px;font-size:22.5px;color:#000000;transform:scaleX(1.065);">RBX</span>
<span class="t m " style="left:98.1px;top:32.12px;height:24px;line-height:24px;font-size:22.5px;color:#ff0000;transform:scaleX(1.065);"><span class="z">0000000000</span>64FDD<span class="z">0</span></span>
<span class="t m " style="left:400.1px;top:32.12px;height:24px;line-height:24px;font-size:22.5px;color:#000000;transform:scaleX(1.065);">&lt;&amp;ZwAllocateVirtualMemory&gt;</span>
<span class="t m " style="left:15.1px;top:56.12px;height:24px;line-height:24px;font-size:22.5px;color:#008300;transform:scaleX(1.065);">RCX</span>
<span class="t m " style="left:98.1px;top:56.12px;height:24px;line-height:24px;font-size:22.5px;color:#ff0000;transform:scaleX(1.065);">FFFFFFFFFFFFFFFF</span>
<span class="t m " style="left:15.1px;top:80.12px;height:24px;line-height:24px;font-size:22.5px;color:#008300;transform:scaleX(1.065);">RDX</span>
<span class="t m " style="left:98.1px;top:80.12px;height:24px;line-height:24px;font-size:22.5px;color:#ff0000;transform:scaleX(1.065);"><span class="z">0000000000</span>64FE<span class="z">00</span></span>
<span class="t m " style="left:15.1px;top:104.12px;height:24px;line-height:24px;font-size:22.5px;color:#000000;transform:scaleX(1.065);">RBP</span>
<span class="t m " style="left:98.1px;top:104.12px;height:24px;line-height:24px;font-size:22.5px;color:#000000;transform:scaleX(1.065);"><span class="z">0000000000</span>756468</span>
<span class="t m " style="left:400.1px;top:104.12px;height:24px;line-height:24px;font-size:22.5px;color:#000000;transform:scaleX(1.065);">&lt;&amp;TppWorkpTaskVFuncs&gt;</span>
<span class="t m " style="left:15.1px;top:128.12px;height:24px;line-height:24px;font-size:22.5px;color:#000000;transform:scaleX(1.065);">RSP</span>
<span class="t m " style="left:98.1px;top:128.12px;height:24px;line-height:24px;font-size:22.5px;color:#000000;transform:scaleX(1.065);"><span class="z">0000000000</span>C4FBD8</span>
<span class="t m " style="left:15.1px;top:152.11px;height:24px;line-height:24px;font-size:22.5px;color:#000000;transform:scaleX(1.065);">RSI</span>
<span class="t m " style="left:98.1px;top:152.11px;height:24px;line-height:24px;font-size:22.5px;color:#000000;transform:scaleX(1.065);"><span class="z">0000000000</span>7565C<span class="z">0</span></span>
<span class="t m " style="left:15.1px;top:176.11px;height:24px;line-height:24px;font-size:22.5px;color:#000000;transform:scaleX(1.065);">RDI</span>
<span class="t m " style="left:98.1px;top:176.11px;height:24px;line-height:24px;font-size:22.5px;color:#000000;transform:scaleX(1.065);"><span class="z">00000000</span>7FFE<span class="z">0</span>386</span>
<span class="t m " style="left:15.1px;top:224.11px;height:24px;line-height:24px;font-size:22.5px;color:#008300;transform:scaleX(1.065);">R8</span>
<span class="t m " style="left:98.1px;top:224.11px;height:24px;line-height:24px;font-size:22.5px;color:#ff0000;transform:scaleX(1.065);"><span class="z">0000000000000000</span></span>
<span class="t m " style="left:15.1px;top:248.11px;height:24px;line-height:24px;font-size:22.5px;color:#008300;transform:scaleX(1.065);">R9</span>
<span class="t m " style="left:98.1px;top:248.11px;height:24px;line-height:24px;font-size:22.5px;color:#ff0000;transform:scaleX(1.065);"><span class="z">0000000000</span>64FDF8</span>
<span class="t m " style="left:15.1px;top:272.11px;height:24px;line-height:24px;font-size:22.5px;color:#000000;transform:scaleX(1.065);">R1<span class="z">0</span></span>
<span class="t m " style="left:98.1px;top:272.11px;height:24px;line-height:24px;font-size:22.5px;color:#ff0000;transform:scaleX(1.065);"><span class="z">000000000000</span>3<span class="z">000</span></span>
<span class="t m " style="left:15.1px;top:296.11px;height:24px;line-height:24px;font-size:22.5px;color:#000000;transform:scaleX(1.065);">R11</span>
<span class="t m " style="left:98.1px;top:296.11px;height:24px;line-height:24px;font-size:22.5px;color:#000000;transform:scaleX(1.065);"><span class="z">00000000</span>7FFE<span class="z">000</span>8</span>
<span class="t m " style="left:15.1px;top:320.11px;height:24px;line-height:24px;font-size:22.5px;color:#000000;transform:scaleX(1.065);">R12</span>
<span class="t m " style="left:98.1px;top:320.11px;height:24px;line-height:24px;font-size:22.5px;color:#000000;transform:scaleX(1.065);"><span class="z">00000000</span>7FFE<span class="z">0</span>3B<span class="z">0</span></span>
<span class="t m " style="left:15.1px;top:344.11px;height:24px;line-height:24px;font-size:22.5px;color:#000000;transform:scaleX(1.065);">R13</span>
<span class="t m " style="left:98.1px;top:344.11px;height:24px;line-height:24px;font-size:22.5px;color:#000000;transform:scaleX(1.065);"><span class="z">0000000000000</span>22C</span>
<span class="t m " style="left:400.1px;top:344.11px;height:24px;line-height:24px;font-size:22.5px;color:#000000;transform:scaleX(1.065);">L'Ȭ'</span>
<span class="t m " style="left:15.1px;top:368.11px;height:24px;line-height:24px;font-size:22.5px;color:#000000;transform:scaleX(1.065);">R14</span>
<span class="t m " style="left:98.1px;top:368.11px;height:24px;line-height:24px;font-size:22.5px;color:#000000;transform:scaleX(1.065);"><span class="z">0000000000</span>C4FDA8</span>
<div style="left:14.5px;top:29px;width:42px;height:3.6px;background:#00a000;"></div>
</div>
<div style="left:1599.5px;top:481.5px;width:920.5px;height:29px;background:#f0f0f0;"></div>
<div style="left:1627.7px;top:482px;width:394px;height:28px;background:#cdcdcd;"></div>
<div style="left:1598.5px;top:510.5px;width:925px;height:4.2px;background:#8a8a8a;"></div>
<svg width="2520" height="805" viewBox="0 0 2520 805"><g stroke="#555" stroke-width="2.3" fill="none"><path d="M1616.3 490.2L1610.8 495.6L1616.3 501"/><path d="M2499.5 490.2L2505 495.6L2499.5 501"/></g></svg>
<div style="left:2517.6px;top:86px;width:2.4px;height:395.5px;background:#f0f0f0;"></div>
<div style="left:2517.6px;top:115px;width:2.4px;height:49px;background:#c4c4c4;"></div>
<div style="left:1.1px;top:519.5px;width:146.5px;height:44px;background:#ffffff;border:1px solid #d9d9d9;border-bottom:none;"></div>
<span class="t c " style="left:59.8px;top:532.18px;height:21px;line-height:21px;font-size:17.7px;color:#000;">Dump 1</span>
<svg style="left:22px;top:526px" width="30" height="30" viewBox="0 0 30 30"><rect x="8" y="2" width="9" height="17" fill="#b0b0b4"/><rect x="18" y="2" width="9" height="17" fill="#c4c4c8"/><rect x="8" y="2" width="19" height="3" fill="#d8d8dc"/><rect x="0" y="6" width="8" height="14" fill="#e8b020"/><rect x="1" y="9" width="4" height="6" fill="#5080d0"/><rect x="0" y="19" width="28" height="3" fill="#606068"/><circle cx="5" cy="22" r="3" fill="#303030"/><circle cx="22" cy="22" r="3" fill="#303030"/><circle cx="5" cy="22" r="1.1" fill="#a0a0a0"/><circle cx="22" cy="22" r="1.1" fill="#a0a0a0"/></svg>
<div style="left:146.6px;top:523px;width:138.8px;height:40.5px;background:#f0f0f0;border:1px solid #d9d9d9;border-bottom:none;"></div>
<span class="t c " style="left:201.3px;top:533.18px;height:21px;line-height:21px;font-size:17.7px;color:#000;">Dump 2</span>
<svg style="left:164px;top:527px" width="30" height="30" viewBox="0 0 30 30"><rect x="8" y="2" width="9" height="17" fill="#b0b0b4"/><rect x="18" y="2" width="9" height="17" fill="#c4c4c8"/><rect x="8" y="2" width="19" height="3" fill="#d8d8dc"/><rect x="0" y="6" width="8" height="14" fill="#e8b020"/><rect x="1" y="9" width="4" height="6" fill="#5080d0"/><rect x="0" y="19" width="28" height="3" fill="#606068"/><circle cx="5" cy="22" r="3" fill="#303030"/><circle cx="22" cy="22" r="3" fill="#303030"/><circle cx="5" cy="22" r="1.1" fill="#a0a0a0"/><circle cx="22" cy="22" r="1.1" fill="#a0a0a0"/></svg>
<div style="left:284.4px;top:523px;width:143.2px;height:40.5px;background:#f0f0f0;border:1px solid #d9d9d9;border-bottom:none;"></div>
<span class="t c " style="left:343.3px;top:533.18px;height:21px;line-height:21px;font-size:17.7px;color:#000;">Dump 3</span>
<svg style="left:306px;top:527px" width="30" height="30" viewBox="0 0 30 30"><rect x="8" y="2" width="9" height="17" fill="#b0b0b4"/><rect x="18" y="2" width="9" height="17" fill="#c4c4c8"/><rect x="8" y="2" width="19" height="3" fill="#d8d8dc"/><rect x="0" y="6" width="8" height="14" fill="#e8b020"/><rect x="1" y="9" width="4" height="6" fill="#5080d0"/><rect x="0" y="19" width="28" height="3" fill="#606068"/><circle cx="5" cy="22" r="3" fill="#303030"/><circle cx="22" cy="22" r="3" fill="#303030"/><circle cx="5" cy="22" r="1.1" fill="#a0a0a0"/><circle cx="22" cy="22" r="1.1" fill="#a0a0a0"/></svg>
<div style="left:426.6px;top:523px;width:143px;height:40.5px;background:#f0f0f0;border:1px solid #d9d9d9;border-bottom:none;"></div>
<span class="t c " style="left:485.3px;top:533.18px;height:21px;line-height:21px;font-size:17.7px;color:#000;">Dump 4</span>
<svg style="left:448px;top:527px" width="30" height="30" viewBox="0 0 30 30"><rect x="8" y="2" width="9" height="17" fill="#b0b0b4"/><rect x="18" y="2" width="9" height="17" fill="#c4c4c8"/><rect x="8" y="2" width="19" height="3" fill="#d8d8dc"/><rect x="0" y="6" width="8" height="14" fill="#e8b020"/><rect x="1" y="9" width="4" height="6" fill="#5080d0"/><rect x="0" y="19" width="28" height="3" fill="#606068"/><circle cx="5" cy="22" r="3" fill="#303030"/><circle cx="22" cy="22" r="3" fill="#303030"/><circle cx="5" cy="22" r="1.1" fill="#a0a0a0"/><circle cx="22" cy="22" r="1.1" fill="#a0a0a0"/></svg>
<div style="left:568.6px;top:523px;width:143px;height:40.5px;background:#f0f0f0;border:1px solid #d9d9d9;border-bottom:none;"></div>
<span class="t c " style="left:627.3px;top:533.18px;height:21px;line-height:21px;font-size:17.7px;color:#000;">Dump 5</span>
<svg style="left:590px;top:527px" width="30" height="30" viewBox="0 0 30 30"><rect x="8" y="2" width="9" height="17" fill="#b0b0b4"/><rect x="18" y="2" width="9" height="17" fill="#c4c4c8"/><rect x="8" y="2" width="19" height="3" fill="#d8d8dc"/><rect x="0" y="6" width="8" height="14" fill="#e8b020"/><rect x="1" y="9" width="4" height="6" fill="#5080d0"/><rect x="0" y="19" width="28" height="3" fill="#606068"/><circle cx="5" cy="22" r="3" fill="#303030"/><circle cx="22" cy="22" r="3" fill="#303030"/><circle cx="5" cy="22" r="1.1" fill="#a0a0a0"/><circle cx="22" cy="22" r="1.1" fill="#a0a0a0"/></svg>
<div style="left:710.6px;top:523px;width:145px;height:40.5px;background:#f0f0f0;border:1px solid #d9d9d9;border-bottom:none;"></div>
<span class="t c " style="left:768.8px;top:533.18px;height:21px;line-height:21px;font-size:17.7px;color:#000;">Watch 1</span>
<svg style="left:732px;top:527px" width="30" height="30" viewBox="0 0 30 30"><path d="M3 2L9 7H17L23 2L24 12C25 18 20 25 13 25C6 25 1 18 2 12Z" fill="#d8a060"/><path d="M8 9L13 6L18 9L13 12Z" fill="#b87838"/><circle cx="8.5" cy="14" r="1.6" fill="#405870"/><circle cx="17.5" cy="14" r="1.6" fill="#405870"/><path d="M11 18H15L13 21Z" fill="#704020"/><path d="M9 20Q13 25 17 20" fill="#f0d8b0"/></svg>
<div style="left:854.6px;top:523px;width:129px;height:40.5px;background:#f0f0f0;border:1px solid #d9d9d9;border-bottom:none;"></div>
<span class="t c " style="left:913.8px;top:533.18px;height:21px;line-height:21px;font-size:17.7px;color:#000;">Locals</span>
<svg style="left:876px;top:527px" width="30" height="30" viewBox="0 0 30 30"><g stroke="#404040" stroke-width="1.8" fill="none"><path d="M3 8H1V24H3"/><path d="M25 8H27V24H25"/></g><g stroke="#a06070" stroke-width="1.8"><path d="M6 12L12 20M12 12L6 20"/></g><g stroke="#707070" stroke-width="1.8"><path d="M15 14H22M15 18H22"/></g></svg>
<div style="left:982.6px;top:523px;width:123px;height:40.5px;background:#f0f0f0;border:1px solid #d9d9d9;border-bottom:none;"></div>
<span class="t c " style="left:1040.3px;top:533.18px;height:21px;line-height:21px;font-size:17.7px;color:#000;">Struct</span>
<svg style="left:1003px;top:527px" width="30" height="30" viewBox="0 0 30 30"><path d="M5 27L16 10C18 6 21 5 22 8C23 10 22 12 20 13" stroke="#e04858" stroke-width="5" fill="none" stroke-linecap="round"/><path d="M5 27L16 10C18 6 21 5 22 8C23 10 22 12 20 13" stroke="#fff" stroke-width="5" fill="none" stroke-dasharray="3 4" stroke-linecap="butt"/><path d="M5 27L16 10C18 6 21 5 22 8C23 10 22 12 20 13" stroke="#e0485880" stroke-width="5.6" fill="none" stroke-linecap="round" stroke-opacity="0.25"/></svg>
<div style="left:0px;top:563px;width:1228px;height:1.2px;background:#a0a0a0;"></div>
<div style="left:2.5px;top:564.5px;width:1224.5px;height:245px;background:#fff8f0;border:1px solid #828790;"></div>
<div style="left:4px;top:566px;width:240px;height:31px;background:#c0c0c0;"></div>
<div style="left:4px;top:594px;width:240px;height:3px;background:#808080;"></div>
<div style="left:241px;top:566px;width:3px;height:31px;background:#808080;"></div>
<svg style="left:4px;top:566px" width="240" height="31"><path d="M0 31L3 28H0Z" fill="#c0c0c0"/><path d="M240 0L237 3V0Z" fill="#c0c0c0"/></svg>
<span class="t m " style="left:13.2px;top:567.01px;height:26px;line-height:26px;font-size:22.5px;color:#000000;transform:scaleX(1.065);">Address</span>
<div style="left:244px;top:566px;width:674px;height:31px;background:#c0c0c0;"></div>
<div style="left:244px;top:594px;width:674px;height:3px;background:#808080;"></div>
<div style="left:915px;top:566px;width:3px;height:31px;background:#808080;"></div>
<svg style="left:244px;top:566px" width="674" height="31"><path d="M0 31L3 28H0Z" fill="#c0c0c0"/><path d="M674 0L671 3V0Z" fill="#c0c0c0"/></svg>
<span class="t m " style="left:253.2px;top:567.01px;height:26px;line-height:26px;font-size:22.5px;color:#000000;transform:scaleX(1.065);">Hex</span>
<div style="left:918px;top:566px;width:240px;height:31px;background:#c0c0c0;"></div>
<div style="left:918px;top:594px;width:240px;height:3px;background:#808080;"></div>
<div style="left:1155px;top:566px;width:3px;height:31px;background:#808080;"></div>
<svg style="left:918px;top:566px" width="240" height="31"><path d="M0 31L3 28H0Z" fill="#c0c0c0"/><path d="M240 0L237 3V0Z" fill="#c0c0c0"/></svg>
<span class="t m " style="left:927.2px;top:567.01px;height:26px;line-height:26px;font-size:22.5px;color:#000000;transform:scaleX(1.065);">ASCII</span>
<div style="left:1158px;top:566px;width:39px;height:31px;background:#c0c0c0;"></div>
<div style="left:1158px;top:594px;width:39px;height:3px;background:#808080;"></div>
<div style="left:1194px;top:566px;width:3px;height:31px;background:#808080;"></div>
<svg style="left:1158px;top:566px" width="39" height="31"><path d="M0 31L3 28H0Z" fill="#c0c0c0"/><path d="M39 0L36 3V0Z" fill="#c0c0c0"/></svg>
<div style="left:1196.6px;top:565.5px;width:29.6px;height:240px;background:#f0f0f0;"></div>
<svg width="2520" height="805" viewBox="0 0 2520 805"><path d="M1206.2 585L1211.6 579.5L1217 585" stroke="#555" stroke-width="2.3" fill="none"/></svg>
<div class="clip" style="left:4px;top:596.4px;width:236.6px;height:26px;">
<span class="t m " style="left:8px;top:-0.08px;height:26px;line-height:26px;font-size:22.5px;color:#ff0000;transform:scaleX(1.065);"><span class="z">0000000000</span>64FDD<span class="z">0</span></span>
</div>
<div style="left:244px;top:598.6px;width:42px;height:24px;background:#c0c0c0;"></div>
<div style="left:926px;top:598.6px;width:14px;height:24px;background:#c0c0c0;"></div>
<span class="t m " style="left:252.3px;top:596.32px;height:26px;line-height:26px;font-size:22.5px;color:#000000;transform:scaleX(1.065);">B<span class="z">0</span></span>
<span class="t m " style="left:926px;top:596.32px;height:26px;line-height:26px;font-size:22.5px;color:#000000;transform:scaleX(1.065);">°</span>
<span class="t m " style="left:294.3px;top:596.32px;height:26px;line-height:26px;font-size:22.5px;color:#000000;transform:scaleX(1.065);">D3</span>
<span class="t m " style="left:940px;top:596.32px;height:26px;line-height:26px;font-size:22.5px;color:#000000;transform:scaleX(1.065);">Ó</span>
<span class="t m " style="left:336.3px;top:596.32px;height:26px;line-height:26px;font-size:22.5px;color:#000000;transform:scaleX(1.065);">DA</span>
<span class="t m " style="left:954px;top:596.32px;height:26px;line-height:26px;font-size:22.5px;color:#000000;transform:scaleX(1.065);">Ú</span>
<span class="t m " style="left:378.3px;top:596.32px;height:26px;line-height:26px;font-size:22.5px;color:#000000;transform:scaleX(1.065);">19</span>
<span class="t m " style="left:968px;top:596.32px;height:26px;line-height:26px;font-size:22.5px;color:#000000;transform:scaleX(1.065);">.</span>
<span class="t m " style="left:420.3px;top:596.32px;height:26px;line-height:26px;font-size:22.5px;color:#000000;transform:scaleX(1.065);">FD</span>
<span class="t m " style="left:982px;top:596.32px;height:26px;line-height:26px;font-size:22.5px;color:#000000;transform:scaleX(1.065);">ý</span>
<span class="t m " style="left:462.3px;top:596.32px;height:26px;line-height:26px;font-size:22.5px;color:#808000;transform:scaleX(1.065);">7F</span>
<span class="t m " style="left:996px;top:596.32px;height:26px;line-height:26px;font-size:22.5px;color:#808000;transform:scaleX(1.065);">.</span>
<span class="t m " style="left:504.3px;top:596.32px;height:26px;line-height:26px;font-size:22.5px;color:#008000;transform:scaleX(1.065);"><span class="z">00</span></span>
<span class="t m " style="left:1010px;top:596.32px;height:26px;line-height:26px;font-size:22.5px;color:#008000;transform:scaleX(1.065);">.</span>
<span class="t m " style="left:546.3px;top:596.32px;height:26px;line-height:26px;font-size:22.5px;color:#008000;transform:scaleX(1.065);"><span class="z">00</span></span>
<span class="t m " style="left:1024px;top:596.32px;height:26px;line-height:26px;font-size:22.5px;color:#008000;transform:scaleX(1.065);">.</span>
<span class="t m " style="left:588.3px;top:596.32px;height:26px;line-height:26px;font-size:22.5px;color:#800000;transform:scaleX(1.065);">FF</span>
<span class="t m " style="left:1038px;top:596.32px;height:26px;line-height:26px;font-size:22.5px;color:#800000;transform:scaleX(1.065);">ÿ</span>
<span class="t m " style="left:630.3px;top:596.32px;height:26px;line-height:26px;font-size:22.5px;color:#800000;transform:scaleX(1.065);">FF</span>
<span class="t m " style="left:1052px;top:596.32px;height:26px;line-height:26px;font-size:22.5px;color:#800000;transform:scaleX(1.065);">ÿ</span>
<span class="t m " style="left:672.3px;top:596.32px;height:26px;line-height:26px;font-size:22.5px;color:#800000;transform:scaleX(1.065);">FF</span>
<span class="t m " style="left:1066px;top:596.32px;height:26px;line-height:26px;font-size:22.5px;color:#800000;transform:scaleX(1.065);">ÿ</span>
<span class="t m " style="left:714.3px;top:596.32px;height:26px;line-height:26px;font-size:22.5px;color:#800000;transform:scaleX(1.065);">FF</span>
<span class="t m " style="left:1080px;top:596.32px;height:26px;line-height:26px;font-size:22.5px;color:#800000;transform:scaleX(1.065);">ÿ</span>
<span class="t m " style="left:756.3px;top:596.32px;height:26px;line-height:26px;font-size:22.5px;color:#800000;transform:scaleX(1.065);">FF</span>
<span class="t m " style="left:1094px;top:596.32px;height:26px;line-height:26px;font-size:22.5px;color:#800000;transform:scaleX(1.065);">ÿ</span>
<span class="t m " style="left:798.3px;top:596.32px;height:26px;line-height:26px;font-size:22.5px;color:#800000;transform:scaleX(1.065);">FF</span>
<span class="t m " style="left:1108px;top:596.32px;height:26px;line-height:26px;font-size:22.5px;color:#800000;transform:scaleX(1.065);">ÿ</span>
<span class="t m " style="left:840.3px;top:596.32px;height:26px;line-height:26px;font-size:22.5px;color:#800000;transform:scaleX(1.065);">FF</span>
<span class="t m " style="left:1122px;top:596.32px;height:26px;line-height:26px;font-size:22.5px;color:#800000;transform:scaleX(1.065);">ÿ</span>
<span class="t m " style="left:882.3px;top:596.32px;height:26px;line-height:26px;font-size:22.5px;color:#800000;transform:scaleX(1.065);">FF</span>
<span class="t m " style="left:1136px;top:596.32px;height:26px;line-height:26px;font-size:22.5px;color:#800000;transform:scaleX(1.065);">ÿ</span>
<div style="left:252px;top:619.2px;width:322.2px;height:3.8px;background:#ff0000;"></div>
<div class="clip" style="left:4px;top:622.4px;width:236.6px;height:26px;">
<span class="t m " style="left:8px;top:-0.08px;height:26px;line-height:26px;font-size:22.5px;color:#000000;transform:scaleX(1.065);"><span class="z">0000000000</span>64FDE<span class="z">0</span></span>
</div>
<span class="t m " style="left:252.3px;top:622.32px;height:26px;line-height:26px;font-size:22.5px;color:#008000;transform:scaleX(1.065);"><span class="z">00</span></span>
<span class="t m " style="left:926px;top:622.32px;height:26px;line-height:26px;font-size:22.5px;color:#008000;transform:scaleX(1.065);">.</span>
<span class="t m " style="left:294.3px;top:622.32px;height:26px;line-height:26px;font-size:22.5px;color:#000000;transform:scaleX(1.065);">FE</span>
<span class="t m " style="left:940px;top:622.32px;height:26px;line-height:26px;font-size:22.5px;color:#000000;transform:scaleX(1.065);">þ</span>
<span class="t m " style="left:336.3px;top:622.32px;height:26px;line-height:26px;font-size:22.5px;color:#800080;transform:scaleX(1.065);">64</span>
<span class="t m " style="left:954px;top:622.32px;height:26px;line-height:26px;font-size:22.5px;color:#800080;transform:scaleX(1.065);">d</span>
<span class="t m " style="left:378.3px;top:622.32px;height:26px;line-height:26px;font-size:22.5px;color:#008000;transform:scaleX(1.065);"><span class="z">00</span></span>
<span class="t m " style="left:968px;top:622.32px;height:26px;line-height:26px;font-size:22.5px;color:#008000;transform:scaleX(1.065);">.</span>
<span class="t m " style="left:420.3px;top:622.32px;height:26px;line-height:26px;font-size:22.5px;color:#008000;transform:scaleX(1.065);"><span class="z">00</span></span>
<span class="t m " style="left:982px;top:622.32px;height:26px;line-height:26px;font-size:22.5px;color:#008000;transform:scaleX(1.065);">.</span>
<span class="t m " style="left:462.3px;top:622.32px;height:26px;line-height:26px;font-size:22.5px;color:#008000;transform:scaleX(1.065);"><span class="z">00</span></span>
<span class="t m " style="left:996px;top:622.32px;height:26px;line-height:26px;font-size:22.5px;color:#008000;transform:scaleX(1.065);">.</span>
<span class="t m " style="left:504.3px;top:622.32px;height:26px;line-height:26px;font-size:22.5px;color:#008000;transform:scaleX(1.065);"><span class="z">00</span></span>
<span class="t m " style="left:1010px;top:622.32px;height:26px;line-height:26px;font-size:22.5px;color:#008000;transform:scaleX(1.065);">.</span>
<span class="t m " style="left:546.3px;top:622.32px;height:26px;line-height:26px;font-size:22.5px;color:#008000;transform:scaleX(1.065);"><span class="z">00</span></span>
<span class="t m " style="left:1024px;top:622.32px;height:26px;line-height:26px;font-size:22.5px;color:#008000;transform:scaleX(1.065);">.</span>
<span class="t m " style="left:588.3px;top:622.32px;height:26px;line-height:26px;font-size:22.5px;color:#000000;transform:scaleX(1.065);">F8</span>
<span class="t m " style="left:1038px;top:622.32px;height:26px;line-height:26px;font-size:22.5px;color:#000000;transform:scaleX(1.065);">ø</span>
<span class="t m " style="left:630.3px;top:622.32px;height:26px;line-height:26px;font-size:22.5px;color:#000000;transform:scaleX(1.065);">FD</span>
<span class="t m " style="left:1052px;top:622.32px;height:26px;line-height:26px;font-size:22.5px;color:#000000;transform:scaleX(1.065);">ý</span>
<span class="t m " style="left:672.3px;top:622.32px;height:26px;line-height:26px;font-size:22.5px;color:#800080;transform:scaleX(1.065);">64</span>
<span class="t m " style="left:1066px;top:622.32px;height:26px;line-height:26px;font-size:22.5px;color:#800080;transform:scaleX(1.065);">d</span>
<span class="t m " style="left:714.3px;top:622.32px;height:26px;line-height:26px;font-size:22.5px;color:#008000;transform:scaleX(1.065);"><span class="z">00</span></span>
<span class="t m " style="left:1080px;top:622.32px;height:26px;line-height:26px;font-size:22.5px;color:#008000;transform:scaleX(1.065);">.</span>
<span class="t m " style="left:756.3px;top:622.32px;height:26px;line-height:26px;font-size:22.5px;color:#008000;transform:scaleX(1.065);"><span class="z">00</span></span>
<span class="t m " style="left:1094px;top:622.32px;height:26px;line-height:26px;font-size:22.5px;color:#008000;transform:scaleX(1.065);">.</span>
<span class="t m " style="left:798.3px;top:622.32px;height:26px;line-height:26px;font-size:22.5px;color:#008000;transform:scaleX(1.065);"><span class="z">00</span></span>
<span class="t m " style="left:1108px;top:622.32px;height:26px;line-height:26px;font-size:22.5px;color:#008000;transform:scaleX(1.065);">.</span>
<span class="t m " style="left:840.3px;top:622.32px;height:26px;line-height:26px;font-size:22.5px;color:#008000;transform:scaleX(1.065);"><span class="z">00</span></span>
<span class="t m " style="left:1122px;top:622.32px;height:26px;line-height:26px;font-size:22.5px;color:#008000;transform:scaleX(1.065);">.</span>
<span class="t m " style="left:882.3px;top:622.32px;height:26px;line-height:26px;font-size:22.5px;color:#008000;transform:scaleX(1.065);"><span class="z">00</span></span>
<span class="t m " style="left:1136px;top:622.32px;height:26px;line-height:26px;font-size:22.5px;color:#008000;transform:scaleX(1.065);">.</span>
<div style="left:252px;top:645.2px;width:322.2px;height:3.8px;background:#000090;"></div>
<div style="left:588px;top:645.2px;width:322.2px;height:3.8px;background:#000090;"></div>
<div class="clip" style="left:4px;top:648.4px;width:236.6px;height:26px;">
<span class="t m " style="left:8px;top:-0.08px;height:26px;line-height:26px;font-size:22.5px;color:#000000;transform:scaleX(1.065);"><span class="z">0000000000</span>64FDF<span class="z">0</span></span>
</div>
<span class="t m " style="left:252.3px;top:648.32px;height:26px;line-height:26px;font-size:22.5px;color:#800080;transform:scaleX(1.065);">2<span class="z">0</span></span>
<span class="t m " style="left:294.3px;top:648.32px;height:26px;line-height:26px;font-size:22.5px;color:#008000;transform:scaleX(1.065);"><span class="z">00</span></span>
<span class="t m " style="left:940px;top:648.32px;height:26px;line-height:26px;font-size:22.5px;color:#008000;transform:scaleX(1.065);">.</span>
<span class="t m " style="left:336.3px;top:648.32px;height:26px;line-height:26px;font-size:22.5px;color:#008000;transform:scaleX(1.065);"><span class="z">00</span></span>
<span class="t m " style="left:954px;top:648.32px;height:26px;line-height:26px;font-size:22.5px;color:#008000;transform:scaleX(1.065);">.</span>
<span class="t m " style="left:378.3px;top:648.32px;height:26px;line-height:26px;font-size:22.5px;color:#008000;transform:scaleX(1.065);"><span class="z">00</span></span>
<span class="t m " style="left:968px;top:648.32px;height:26px;line-height:26px;font-size:22.5px;color:#008000;transform:scaleX(1.065);">.</span>
<span class="t m " style="left:420.3px;top:648.32px;height:26px;line-height:26px;font-size:22.5px;color:#008000;transform:scaleX(1.065);"><span class="z">00</span></span>
<span class="t m " style="left:982px;top:648.32px;height:26px;line-height:26px;font-size:22.5px;color:#008000;transform:scaleX(1.065);">.</span>
<span class="t m " style="left:462.3px;top:648.32px;height:26px;line-height:26px;font-size:22.5px;color:#008000;transform:scaleX(1.065);"><span class="z">00</span></span>
<span class="t m " style="left:996px;top:648.32px;height:26px;line-height:26px;font-size:22.5px;color:#008000;transform:scaleX(1.065);">.</span>
<span class="t m " style="left:504.3px;top:648.32px;height:26px;line-height:26px;font-size:22.5px;color:#008000;transform:scaleX(1.065);"><span class="z">00</span></span>
<span class="t m " style="left:1010px;top:648.32px;height:26px;line-height:26px;font-size:22.5px;color:#008000;transform:scaleX(1.065);">.</span>
<span class="t m " style="left:546.3px;top:648.32px;height:26px;line-height:26px;font-size:22.5px;color:#008000;transform:scaleX(1.065);"><span class="z">00</span></span>
<span class="t m " style="left:1024px;top:648.32px;height:26px;line-height:26px;font-size:22.5px;color:#008000;transform:scaleX(1.065);">.</span>
<span class="t m " style="left:588.3px;top:648.32px;height:26px;line-height:26px;font-size:22.5px;color:#008000;transform:scaleX(1.065);"><span class="z">00</span></span>
<span class="t m " style="left:1038px;top:648.32px;height:26px;line-height:26px;font-size:22.5px;color:#008000;transform:scaleX(1.065);">.</span>
<span class="t m " style="left:630.3px;top:648.32px;height:26px;line-height:26px;font-size:22.5px;color:#000000;transform:scaleX(1.065);">1<span class="z">0</span></span>
<span class="t m " style="left:1052px;top:648.32px;height:26px;line-height:26px;font-size:22.5px;color:#000000;transform:scaleX(1.065);">.</span>
<span class="t m " style="left:672.3px;top:648.32px;height:26px;line-height:26px;font-size:22.5px;color:#008000;transform:scaleX(1.065);"><span class="z">00</span></span>
<span class="t m " style="left:1066px;top:648.32px;height:26px;line-height:26px;font-size:22.5px;color:#008000;transform:scaleX(1.065);">.</span>
<span class="t m " style="left:714.3px;top:648.32px;height:26px;line-height:26px;font-size:22.5px;color:#008000;transform:scaleX(1.065);"><span class="z">00</span></span>
<span class="t m " style="left:1080px;top:648.32px;height:26px;line-height:26px;font-size:22.5px;color:#008000;transform:scaleX(1.065);">.</span>
<span class="t m " style="left:756.3px;top:648.32px;height:26px;line-height:26px;font-size:22.5px;color:#008000;transform:scaleX(1.065);"><span class="z">00</span></span>
<span class="t m " style="left:1094px;top:648.32px;height:26px;line-height:26px;font-size:22.5px;color:#008000;transform:scaleX(1.065);">.</span>
<span class="t m " style="left:798.3px;top:648.32px;height:26px;line-height:26px;font-size:22.5px;color:#008000;transform:scaleX(1.065);"><span class="z">00</span></span>
<span class="t m " style="left:1108px;top:648.32px;height:26px;line-height:26px;font-size:22.5px;color:#008000;transform:scaleX(1.065);">.</span>
<span class="t m " style="left:840.3px;top:648.32px;height:26px;line-height:26px;font-size:22.5px;color:#008000;transform:scaleX(1.065);"><span class="z">00</span></span>
<span class="t m " style="left:1122px;top:648.32px;height:26px;line-height:26px;font-size:22.5px;color:#008000;transform:scaleX(1.065);">.</span>
<span class="t m " style="left:882.3px;top:648.32px;height:26px;line-height:26px;font-size:22.5px;color:#008000;transform:scaleX(1.065);"><span class="z">00</span></span>
<span class="t m " style="left:1136px;top:648.32px;height:26px;line-height:26px;font-size:22.5px;color:#008000;transform:scaleX(1.065);">.</span>
<div class="clip" style="left:4px;top:674.4px;width:236.6px;height:26px;">
<span class="t m " style="left:8px;top:-0.08px;height:26px;line-height:26px;font-size:22.5px;color:#000000;transform:scaleX(1.065);"><span class="z">0000000000</span>64FE<span class="z">00</span></span>
</div>
<span class="t m " style="left:252.3px;top:674.32px;height:26px;line-height:26px;font-size:22.5px;color:#008000;transform:scaleX(1.065);"><span class="z">00</span></span>
<span class="t m " style="left:926px;top:674.32px;height:26px;line-height:26px;font-size:22.5px;color:#008000;transform:scaleX(1.065);">.</span>
<span class="t m " style="left:294.3px;top:674.32px;height:26px;line-height:26px;font-size:22.5px;color:#008000;transform:scaleX(1.065);"><span class="z">00</span></span>
<span class="t m " style="left:940px;top:674.32px;height:26px;line-height:26px;font-size:22.5px;color:#008000;transform:scaleX(1.065);">.</span>
<span class="t m " style="left:336.3px;top:674.32px;height:26px;line-height:26px;font-size:22.5px;color:#008000;transform:scaleX(1.065);"><span class="z">00</span></span>
<span class="t m " style="left:954px;top:674.32px;height:26px;line-height:26px;font-size:22.5px;color:#008000;transform:scaleX(1.065);">.</span>
<span class="t m " style="left:378.3px;top:674.32px;height:26px;line-height:26px;font-size:22.5px;color:#008000;transform:scaleX(1.065);"><span class="z">00</span></span>
<span class="t m " style="left:968px;top:674.32px;height:26px;line-height:26px;font-size:22.5px;color:#008000;transform:scaleX(1.065);">.</span>
<span class="t m " style="left:420.3px;top:674.32px;height:26px;line-height:26px;font-size:22.5px;color:#008000;transform:scaleX(1.065);"><span class="z">00</span></span>
<span class="t m " style="left:982px;top:674.32px;height:26px;line-height:26px;font-size:22.5px;color:#008000;transform:scaleX(1.065);">.</span>
<span class="t m " style="left:462.3px;top:674.32px;height:26px;line-height:26px;font-size:22.5px;color:#008000;transform:scaleX(1.065);"><span class="z">00</span></span>
<span class="t m " style="left:996px;top:674.32px;height:26px;line-height:26px;font-size:22.5px;color:#008000;transform:scaleX(1.065);">.</span>
<span class="t m " style="left:504.3px;top:674.32px;height:26px;line-height:26px;font-size:22.5px;color:#008000;transform:scaleX(1.065);"><span class="z">00</span></span>
<span class="t m " style="left:1010px;top:674.32px;height:26px;line-height:26px;font-size:22.5px;color:#008000;transform:scaleX(1.065);">.</span>
<span class="t m " style="left:546.3px;top:674.32px;height:26px;line-height:26px;font-size:22.5px;color:#008000;transform:scaleX(1.065);"><span class="z">00</span></span>
<span class="t m " style="left:1024px;top:674.32px;height:26px;line-height:26px;font-size:22.5px;color:#008000;transform:scaleX(1.065);">.</span>
<span class="t m " style="left:588.3px;top:674.32px;height:26px;line-height:26px;font-size:22.5px;color:#000000;transform:scaleX(1.065);">8<span class="z">0</span></span>
<span class="t m " style="left:1038px;top:674.32px;height:26px;line-height:26px;font-size:22.5px;color:#000000;transform:scaleX(1.065);">.</span>
<span class="t m " style="left:630.3px;top:674.32px;height:26px;line-height:26px;font-size:22.5px;color:#000000;transform:scaleX(1.065);">F1</span>
<span class="t m " style="left:1052px;top:674.32px;height:26px;line-height:26px;font-size:22.5px;color:#000000;transform:scaleX(1.065);">ñ</span>
<span class="t m " style="left:672.3px;top:674.32px;height:26px;line-height:26px;font-size:22.5px;color:#000000;transform:scaleX(1.065);">D1</span>
<span class="t m " style="left:1066px;top:674.32px;height:26px;line-height:26px;font-size:22.5px;color:#000000;transform:scaleX(1.065);">Ñ</span>
<span class="t m " style="left:714.3px;top:674.32px;height:26px;line-height:26px;font-size:22.5px;color:#000000;transform:scaleX(1.065);">19</span>
<span class="t m " style="left:1080px;top:674.32px;height:26px;line-height:26px;font-size:22.5px;color:#000000;transform:scaleX(1.065);">.</span>
<span class="t m " style="left:756.3px;top:674.32px;height:26px;line-height:26px;font-size:22.5px;color:#000000;transform:scaleX(1.065);">FD</span>
<span class="t m " style="left:1094px;top:674.32px;height:26px;line-height:26px;font-size:22.5px;color:#000000;transform:scaleX(1.065);">ý</span>
<span class="t m " style="left:798.3px;top:674.32px;height:26px;line-height:26px;font-size:22.5px;color:#808000;transform:scaleX(1.065);">7F</span>
<span class="t m " style="left:1108px;top:674.32px;height:26px;line-height:26px;font-size:22.5px;color:#808000;transform:scaleX(1.065);">.</span>
<span class="t m " style="left:840.3px;top:674.32px;height:26px;line-height:26px;font-size:22.5px;color:#008000;transform:scaleX(1.065);"><span class="z">00</span></span>
<span class="t m " style="left:1122px;top:674.32px;height:26px;line-height:26px;font-size:22.5px;color:#008000;transform:scaleX(1.065);">.</span>
<span class="t m " style="left:882.3px;top:674.32px;height:26px;line-height:26px;font-size:22.5px;color:#008000;transform:scaleX(1.065);"><span class="z">00</span></span>
<span class="t m " style="left:1136px;top:674.32px;height:26px;line-height:26px;font-size:22.5px;color:#008000;transform:scaleX(1.065);">.</span>
<div style="left:588px;top:697.2px;width:322.2px;height:3.8px;background:#ff0000;"></div>
<div class="clip" style="left:4px;top:700.4px;width:236.6px;height:26px;">
<span class="t m " style="left:8px;top:-0.08px;height:26px;line-height:26px;font-size:22.5px;color:#ff0000;transform:scaleX(1.065);"><span class="z">0000000000</span>64FE1<span class="z">0</span></span>
</div>
<span class="t m " style="left:252.3px;top:700.32px;height:26px;line-height:26px;font-size:22.5px;color:#000000;transform:scaleX(1.065);">C<span class="z">0</span></span>
<span class="t m " style="left:926px;top:700.32px;height:26px;line-height:26px;font-size:22.5px;color:#000000;transform:scaleX(1.065);">À</span>
<span class="t m " style="left:294.3px;top:700.32px;height:26px;line-height:26px;font-size:22.5px;color:#800080;transform:scaleX(1.065);">28</span>
<span class="t m " style="left:940px;top:700.32px;height:26px;line-height:26px;font-size:22.5px;color:#800080;transform:scaleX(1.065);">(</span>
<span class="t m " style="left:336.3px;top:700.32px;height:26px;line-height:26px;font-size:22.5px;color:#000000;transform:scaleX(1.065);">D2</span>
<span class="t m " style="left:954px;top:700.32px;height:26px;line-height:26px;font-size:22.5px;color:#000000;transform:scaleX(1.065);">Ò</span>
<span class="t m " style="left:378.3px;top:700.32px;height:26px;line-height:26px;font-size:22.5px;color:#000000;transform:scaleX(1.065);">19</span>
<span class="t m " style="left:968px;top:700.32px;height:26px;line-height:26px;font-size:22.5px;color:#000000;transform:scaleX(1.065);">.</span>
<span class="t m " style="left:420.3px;top:700.32px;height:26px;line-height:26px;font-size:22.5px;color:#000000;transform:scaleX(1.065);">FD</span>
<span class="t m " style="left:982px;top:700.32px;height:26px;line-height:26px;font-size:22.5px;color:#000000;transform:scaleX(1.065);">ý</span>
<span class="t m " style="left:462.3px;top:700.32px;height:26px;line-height:26px;font-size:22.5px;color:#808000;transform:scaleX(1.065);">7F</span>
<span class="t m " style="left:996px;top:700.32px;height:26px;line-height:26px;font-size:22.5px;color:#808000;transform:scaleX(1.065);">.</span>
<span class="t m " style="left:504.3px;top:700.32px;height:26px;line-height:26px;font-size:22.5px;color:#008000;transform:scaleX(1.065);"><span class="z">00</span></span>
<span class="t m " style="left:1010px;top:700.32px;height:26px;line-height:26px;font-size:22.5px;color:#008000;transform:scaleX(1.065);">.</span>
<span class="t m " style="left:546.3px;top:700.32px;height:26px;line-height:26px;font-size:22.5px;color:#008000;transform:scaleX(1.065);"><span class="z">00</span></span>
<span class="t m " style="left:1024px;top:700.32px;height:26px;line-height:26px;font-size:22.5px;color:#008000;transform:scaleX(1.065);">.</span>
<span class="t m " style="left:588.3px;top:700.32px;height:26px;line-height:26px;font-size:22.5px;color:#000000;transform:scaleX(1.065);">E<span class="z">0</span></span>
<span class="t m " style="left:1038px;top:700.32px;height:26px;line-height:26px;font-size:22.5px;color:#000000;transform:scaleX(1.065);">à</span>
<span class="t m " style="left:630.3px;top:700.32px;height:26px;line-height:26px;font-size:22.5px;color:#000000;transform:scaleX(1.065);">F2</span>
<span class="t m " style="left:1052px;top:700.32px;height:26px;line-height:26px;font-size:22.5px;color:#000000;transform:scaleX(1.065);">ò</span>
<span class="t m " style="left:672.3px;top:700.32px;height:26px;line-height:26px;font-size:22.5px;color:#000000;transform:scaleX(1.065);">D1</span>
<span class="t m " style="left:1066px;top:700.32px;height:26px;line-height:26px;font-size:22.5px;color:#000000;transform:scaleX(1.065);">Ñ</span>
<span class="t m " style="left:714.3px;top:700.32px;height:26px;line-height:26px;font-size:22.5px;color:#000000;transform:scaleX(1.065);">19</span>
<span class="t m " style="left:1080px;top:700.32px;height:26px;line-height:26px;font-size:22.5px;color:#000000;transform:scaleX(1.065);">.</span>
<span class="t m " style="left:756.3px;top:700.32px;height:26px;line-height:26px;font-size:22.5px;color:#000000;transform:scaleX(1.065);">FD</span>
<span class="t m " style="left:1094px;top:700.32px;height:26px;line-height:26px;font-size:22.5px;color:#000000;transform:scaleX(1.065);">ý</span>
<span class="t m " style="left:798.3px;top:700.32px;height:26px;line-height:26px;font-size:22.5px;color:#808000;transform:scaleX(1.065);">7F</span>
<span class="t m " style="left:1108px;top:700.32px;height:26px;line-height:26px;font-size:22.5px;color:#808000;transform:scaleX(1.065);">.</span>
<span class="t m " style="left:840.3px;top:700.32px;height:26px;line-height:26px;font-size:22.5px;color:#008000;transform:scaleX(1.065);"><span class="z">00</span></span>
<span class="t m " style="left:1122px;top:700.32px;height:26px;line-height:26px;font-size:22.5px;color:#008000;transform:scaleX(1.065);">.</span>
<span class="t m " style="left:882.3px;top:700.32px;height:26px;line-height:26px;font-size:22.5px;color:#008000;transform:scaleX(1.065);"><span class="z">00</span></span>
<span class="t m " style="left:1136px;top:700.32px;height:26px;line-height:26px;font-size:22.5px;color:#008000;transform:scaleX(1.065);">.</span>
<div style="left:252px;top:723.2px;width:322.2px;height:3.8px;background:#ff0000;"></div>
<div style="left:588px;top:723.2px;width:322.2px;height:3.8px;background:#ff0000;"></div>
<div class="clip" style="left:4px;top:726.4px;width:236.6px;height:26px;">
<span class="t m " style="left:8px;top:-0.08px;height:26px;line-height:26px;font-size:22.5px;color:#000000;transform:scaleX(1.065);"><span class="z">0000000000</span>64FE2<span class="z">0</span></span>
</div>
<span class="t m " style="left:252.3px;top:726.32px;height:26px;line-height:26px;font-size:22.5px;color:#008000;transform:scaleX(1.065);"><span class="z">00</span></span>
<span class="t m " style="left:926px;top:726.32px;height:26px;line-height:26px;font-size:22.5px;color:#008000;transform:scaleX(1.065);">.</span>
<span class="t m " style="left:294.3px;top:726.32px;height:26px;line-height:26px;font-size:22.5px;color:#008000;transform:scaleX(1.065);"><span class="z">00</span></span>
<span class="t m " style="left:940px;top:726.32px;height:26px;line-height:26px;font-size:22.5px;color:#008000;transform:scaleX(1.065);">.</span>
<span class="t m " style="left:336.3px;top:726.32px;height:26px;line-height:26px;font-size:22.5px;color:#008000;transform:scaleX(1.065);"><span class="z">00</span></span>
<span class="t m " style="left:954px;top:726.32px;height:26px;line-height:26px;font-size:22.5px;color:#008000;transform:scaleX(1.065);">.</span>
<span class="t m " style="left:378.3px;top:726.32px;height:26px;line-height:26px;font-size:22.5px;color:#008000;transform:scaleX(1.065);"><span class="z">00</span></span>
<span class="t m " style="left:968px;top:726.32px;height:26px;line-height:26px;font-size:22.5px;color:#008000;transform:scaleX(1.065);">.</span>
<span class="t m " style="left:420.3px;top:726.32px;height:26px;line-height:26px;font-size:22.5px;color:#008000;transform:scaleX(1.065);"><span class="z">00</span></span>
<span class="t m " style="left:982px;top:726.32px;height:26px;line-height:26px;font-size:22.5px;color:#008000;transform:scaleX(1.065);">.</span>
<span class="t m " style="left:462.3px;top:726.32px;height:26px;line-height:26px;font-size:22.5px;color:#008000;transform:scaleX(1.065);"><span class="z">00</span></span>
<span class="t m " style="left:996px;top:726.32px;height:26px;line-height:26px;font-size:22.5px;color:#008000;transform:scaleX(1.065);">.</span>
<span class="t m " style="left:504.3px;top:726.32px;height:26px;line-height:26px;font-size:22.5px;color:#008000;transform:scaleX(1.065);"><span class="z">00</span></span>
<span class="t m " style="left:1010px;top:726.32px;height:26px;line-height:26px;font-size:22.5px;color:#008000;transform:scaleX(1.065);">.</span>
<span class="t m " style="left:546.3px;top:726.32px;height:26px;line-height:26px;font-size:22.5px;color:#008000;transform:scaleX(1.065);"><span class="z">00</span></span>
<span class="t m " style="left:1024px;top:726.32px;height:26px;line-height:26px;font-size:22.5px;color:#008000;transform:scaleX(1.065);">.</span>
<span class="t m " style="left:588.3px;top:726.32px;height:26px;line-height:26px;font-size:22.5px;color:#000000;transform:scaleX(1.065);">B4</span>
<span class="t m " style="left:1038px;top:726.32px;height:26px;line-height:26px;font-size:22.5px;color:#000000;transform:scaleX(1.065);">´</span>
<span class="t m " style="left:630.3px;top:726.32px;height:26px;line-height:26px;font-size:22.5px;color:#000000;transform:scaleX(1.065);">13</span>
<span class="t m " style="left:1052px;top:726.32px;height:26px;line-height:26px;font-size:22.5px;color:#000000;transform:scaleX(1.065);">.</span>
<span class="t m " style="left:672.3px;top:726.32px;height:26px;line-height:26px;font-size:22.5px;color:#800080;transform:scaleX(1.065);">4<span class="z">0</span></span>
<span class="t m " style="left:1066px;top:726.32px;height:26px;line-height:26px;font-size:22.5px;color:#800080;transform:scaleX(1.065);">@</span>
<span class="t m " style="left:714.3px;top:726.32px;height:26px;line-height:26px;font-size:22.5px;color:#008000;transform:scaleX(1.065);"><span class="z">00</span></span>
<span class="t m " style="left:1080px;top:726.32px;height:26px;line-height:26px;font-size:22.5px;color:#008000;transform:scaleX(1.065);">.</span>
<span class="t m " style="left:756.3px;top:726.32px;height:26px;line-height:26px;font-size:22.5px;color:#008000;transform:scaleX(1.065);"><span class="z">00</span></span>
<span class="t m " style="left:1094px;top:726.32px;height:26px;line-height:26px;font-size:22.5px;color:#008000;transform:scaleX(1.065);">.</span>
<span class="t m " style="left:798.3px;top:726.32px;height:26px;line-height:26px;font-size:22.5px;color:#008000;transform:scaleX(1.065);"><span class="z">00</span></span>
<span class="t m " style="left:1108px;top:726.32px;height:26px;line-height:26px;font-size:22.5px;color:#008000;transform:scaleX(1.065);">.</span>
<span class="t m " style="left:840.3px;top:726.32px;height:26px;line-height:26px;font-size:22.5px;color:#008000;transform:scaleX(1.065);"><span class="z">00</span></span>
<span class="t m " style="left:1122px;top:726.32px;height:26px;line-height:26px;font-size:22.5px;color:#008000;transform:scaleX(1.065);">.</span>
<span class="t m " style="left:882.3px;top:726.32px;height:26px;line-height:26px;font-size:22.5px;color:#008000;transform:scaleX(1.065);"><span class="z">00</span></span>
<span class="t m " style="left:1136px;top:726.32px;height:26px;line-height:26px;font-size:22.5px;color:#008000;transform:scaleX(1.065);">.</span>
<div style="left:588px;top:749.2px;width:322.2px;height:3.8px;background:#00ff00;"></div>
<div class="clip" style="left:4px;top:752.4px;width:236.6px;height:26px;">
<span class="t m " style="left:8px;top:-0.08px;height:26px;line-height:26px;font-size:22.5px;color:#000000;transform:scaleX(1.065);"><span class="z">0000000000</span>64FE3<span class="z">0</span></span>
</div>
<span class="t m " style="left:252.3px;top:752.32px;height:26px;line-height:26px;font-size:22.5px;color:#008000;transform:scaleX(1.065);"><span class="z">00</span></span>
<span class="t m " style="left:926px;top:752.32px;height:26px;line-height:26px;font-size:22.5px;color:#008000;transform:scaleX(1.065);">.</span>
<span class="t m " style="left:294.3px;top:752.32px;height:26px;line-height:26px;font-size:22.5px;color:#008000;transform:scaleX(1.065);"><span class="z">00</span></span>
<span class="t m " style="left:940px;top:752.32px;height:26px;line-height:26px;font-size:22.5px;color:#008000;transform:scaleX(1.065);">.</span>
<span class="t m " style="left:336.3px;top:752.32px;height:26px;line-height:26px;font-size:22.5px;color:#008000;transform:scaleX(1.065);"><span class="z">00</span></span>
<span class="t m " style="left:954px;top:752.32px;height:26px;line-height:26px;font-size:22.5px;color:#008000;transform:scaleX(1.065);">.</span>
<span class="t m " style="left:378.3px;top:752.32px;height:26px;line-height:26px;font-size:22.5px;color:#008000;transform:scaleX(1.065);"><span class="z">00</span></span>
<span class="t m " style="left:968px;top:752.32px;height:26px;line-height:26px;font-size:22.5px;color:#008000;transform:scaleX(1.065);">.</span>
<span class="t m " style="left:420.3px;top:752.32px;height:26px;line-height:26px;font-size:22.5px;color:#008000;transform:scaleX(1.065);"><span class="z">00</span></span>
<span class="t m " style="left:982px;top:752.32px;height:26px;line-height:26px;font-size:22.5px;color:#008000;transform:scaleX(1.065);">.</span>
<span class="t m " style="left:462.3px;top:752.32px;height:26px;line-height:26px;font-size:22.5px;color:#008000;transform:scaleX(1.065);"><span class="z">00</span></span>
<span class="t m " style="left:996px;top:752.32px;height:26px;line-height:26px;font-size:22.5px;color:#008000;transform:scaleX(1.065);">.</span>
<span class="t m " style="left:504.3px;top:752.32px;height:26px;line-height:26px;font-size:22.5px;color:#008000;transform:scaleX(1.065);"><span class="z">00</span></span>
<span class="t m " style="left:1010px;top:752.32px;height:26px;line-height:26px;font-size:22.5px;color:#008000;transform:scaleX(1.065);">.</span>
<span class="t m " style="left:546.3px;top:752.32px;height:26px;line-height:26px;font-size:22.5px;color:#008000;transform:scaleX(1.065);"><span class="z">00</span></span>
<span class="t m " style="left:1024px;top:752.32px;height:26px;line-height:26px;font-size:22.5px;color:#008000;transform:scaleX(1.065);">.</span>
<span class="t m " style="left:588.3px;top:752.32px;height:26px;line-height:26px;font-size:22.5px;color:#800080;transform:scaleX(1.065);">31</span>
<span class="t m " style="left:1038px;top:752.32px;height:26px;line-height:26px;font-size:22.5px;color:#800080;transform:scaleX(1.065);">1</span>
<span class="t m " style="left:630.3px;top:752.32px;height:26px;line-height:26px;font-size:22.5px;color:#008000;transform:scaleX(1.065);"><span class="z">00</span></span>
<span class="t m " style="left:1052px;top:752.32px;height:26px;line-height:26px;font-size:22.5px;color:#008000;transform:scaleX(1.065);">.</span>
<span class="t m " style="left:672.3px;top:752.32px;height:26px;line-height:26px;font-size:22.5px;color:#008000;transform:scaleX(1.065);"><span class="z">00</span></span>
<span class="t m " style="left:1066px;top:752.32px;height:26px;line-height:26px;font-size:22.5px;color:#008000;transform:scaleX(1.065);">.</span>
<span class="t m " style="left:714.3px;top:752.32px;height:26px;line-height:26px;font-size:22.5px;color:#008000;transform:scaleX(1.065);"><span class="z">00</span></span>
<span class="t m " style="left:1080px;top:752.32px;height:26px;line-height:26px;font-size:22.5px;color:#008000;transform:scaleX(1.065);">.</span>
<span class="t m " style="left:756.3px;top:752.32px;height:26px;line-height:26px;font-size:22.5px;color:#008000;transform:scaleX(1.065);"><span class="z">00</span></span>
<span class="t m " style="left:1094px;top:752.32px;height:26px;line-height:26px;font-size:22.5px;color:#008000;transform:scaleX(1.065);">.</span>
<span class="t m " style="left:798.3px;top:752.32px;height:26px;line-height:26px;font-size:22.5px;color:#008000;transform:scaleX(1.065);"><span class="z">00</span></span>
<span class="t m " style="left:1108px;top:752.32px;height:26px;line-height:26px;font-size:22.5px;color:#008000;transform:scaleX(1.065);">.</span>
<span class="t m " style="left:840.3px;top:752.32px;height:26px;line-height:26px;font-size:22.5px;color:#008000;transform:scaleX(1.065);"><span class="z">00</span></span>
<span class="t m " style="left:1122px;top:752.32px;height:26px;line-height:26px;font-size:22.5px;color:#008000;transform:scaleX(1.065);">.</span>
<span class="t m " style="left:882.3px;top:752.32px;height:26px;line-height:26px;font-size:22.5px;color:#008000;transform:scaleX(1.065);"><span class="z">00</span></span>
<span class="t m " style="left:1136px;top:752.32px;height:26px;line-height:26px;font-size:22.5px;color:#008000;transform:scaleX(1.065);">.</span>
<div class="clip" style="left:4px;top:778.4px;width:236.6px;height:26px;">
<span class="t m " style="left:8px;top:-0.08px;height:26px;line-height:26px;font-size:22.5px;color:#000000;transform:scaleX(1.065);"><span class="z">0000000000</span>64FE4<span class="z">0</span></span>
</div>
<span class="t m " style="left:252.3px;top:778.32px;height:26px;line-height:26px;font-size:22.5px;color:#800080;transform:scaleX(1.065);">7<span class="z">0</span></span>
<span class="t m " style="left:926px;top:778.32px;height:26px;line-height:26px;font-size:22.5px;color:#800080;transform:scaleX(1.065);">p</span>
<span class="t m " style="left:294.3px;top:778.32px;height:26px;line-height:26px;font-size:22.5px;color:#800080;transform:scaleX(1.065);">79</span>
<span class="t m " style="left:940px;top:778.32px;height:26px;line-height:26px;font-size:22.5px;color:#800080;transform:scaleX(1.065);">y</span>
<span class="t m " style="left:336.3px;top:778.32px;height:26px;line-height:26px;font-size:22.5px;color:#800080;transform:scaleX(1.065);">4<span class="z">0</span></span>
<span class="t m " style="left:954px;top:778.32px;height:26px;line-height:26px;font-size:22.5px;color:#800080;transform:scaleX(1.065);">@</span>
<span class="t m " style="left:378.3px;top:778.32px;height:26px;line-height:26px;font-size:22.5px;color:#008000;transform:scaleX(1.065);"><span class="z">00</span></span>
<span class="t m " style="left:968px;top:778.32px;height:26px;line-height:26px;font-size:22.5px;color:#008000;transform:scaleX(1.065);">.</span>
<span class="t m " style="left:420.3px;top:778.32px;height:26px;line-height:26px;font-size:22.5px;color:#008000;transform:scaleX(1.065);"><span class="z">00</span></span>
<span class="t m " style="left:982px;top:778.32px;height:26px;line-height:26px;font-size:22.5px;color:#008000;transform:scaleX(1.065);">.</span>
<span class="t m " style="left:462.3px;top:778.32px;height:26px;line-height:26px;font-size:22.5px;color:#008000;transform:scaleX(1.065);"><span class="z">00</span></span>
<span class="t m " style="left:996px;top:778.32px;height:26px;line-height:26px;font-size:22.5px;color:#008000;transform:scaleX(1.065);">.</span>
<span class="t m " style="left:504.3px;top:778.32px;height:26px;line-height:26px;font-size:22.5px;color:#008000;transform:scaleX(1.065);"><span class="z">00</span></span>
<span class="t m " style="left:1010px;top:778.32px;height:26px;line-height:26px;font-size:22.5px;color:#008000;transform:scaleX(1.065);">.</span>
<span class="t m " style="left:546.3px;top:778.32px;height:26px;line-height:26px;font-size:22.5px;color:#008000;transform:scaleX(1.065);"><span class="z">00</span></span>
<span class="t m " style="left:1024px;top:778.32px;height:26px;line-height:26px;font-size:22.5px;color:#008000;transform:scaleX(1.065);">.</span>
<span class="t m " style="left:588.3px;top:778.32px;height:26px;line-height:26px;font-size:22.5px;color:#008000;transform:scaleX(1.065);"><span class="z">00</span></span>
<span class="t m " style="left:1038px;top:778.32px;height:26px;line-height:26px;font-size:22.5px;color:#008000;transform:scaleX(1.065);">.</span>
<span class="t m " style="left:630.3px;top:778.32px;height:26px;line-height:26px;font-size:22.5px;color:#008000;transform:scaleX(1.065);"><span class="z">00</span></span>
<span class="t m " style="left:1052px;top:778.32px;height:26px;line-height:26px;font-size:22.5px;color:#008000;transform:scaleX(1.065);">.</span>
<span class="t m " style="left:672.3px;top:778.32px;height:26px;line-height:26px;font-size:22.5px;color:#008000;transform:scaleX(1.065);"><span class="z">00</span></span>
<span class="t m " style="left:1066px;top:778.32px;height:26px;line-height:26px;font-size:22.5px;color:#008000;transform:scaleX(1.065);">.</span>
<span class="t m " style="left:714.3px;top:778.32px;height:26px;line-height:26px;font-size:22.5px;color:#008000;transform:scaleX(1.065);"><span class="z">00</span></span>
<span class="t m " style="left:1080px;top:778.32px;height:26px;line-height:26px;font-size:22.5px;color:#008000;transform:scaleX(1.065);">.</span>
<span class="t m " style="left:756.3px;top:778.32px;height:26px;line-height:26px;font-size:22.5px;color:#008000;transform:scaleX(1.065);"><span class="z">00</span></span>
<span class="t m " style="left:1094px;top:778.32px;height:26px;line-height:26px;font-size:22.5px;color:#008000;transform:scaleX(1.065);">.</span>
<span class="t m " style="left:798.3px;top:778.32px;height:26px;line-height:26px;font-size:22.5px;color:#008000;transform:scaleX(1.065);"><span class="z">00</span></span>
<span class="t m " style="left:1108px;top:778.32px;height:26px;line-height:26px;font-size:22.5px;color:#008000;transform:scaleX(1.065);">.</span>
<span class="t m " style="left:840.3px;top:778.32px;height:26px;line-height:26px;font-size:22.5px;color:#008000;transform:scaleX(1.065);"><span class="z">00</span></span>
<span class="t m " style="left:1122px;top:778.32px;height:26px;line-height:26px;font-size:22.5px;color:#008000;transform:scaleX(1.065);">.</span>
<span class="t m " style="left:882.3px;top:778.32px;height:26px;line-height:26px;font-size:22.5px;color:#008000;transform:scaleX(1.065);"><span class="z">00</span></span>
<span class="t m " style="left:1136px;top:778.32px;height:26px;line-height:26px;font-size:22.5px;color:#008000;transform:scaleX(1.065);">.</span>
<div style="left:252px;top:801.2px;width:322.2px;height:3.8px;background:#008000;"></div>
<div style="left:242px;top:596px;width:2px;height:210px;background:#8a8a8a;"></div>
<div style="left:411px;top:596px;width:2px;height:210px;background:#9a9a9a;"></div>
<div style="left:579px;top:596px;width:2px;height:210px;background:#808080;"></div>
<div style="left:747px;top:596px;width:2px;height:210px;background:#9a9a9a;"></div>
<div style="left:915px;top:596px;width:2px;height:210px;background:#8a8a8a;"></div>
<div style="left:1155px;top:596px;width:2px;height:210px;background:#8a8a8a;"></div>
<div style="left:1230.5px;top:520.2px;width:1292px;height:290px;background:#fff8f0;border:1px solid #828790;"></div>
<div style="left:1231.5px;top:521px;width:250px;height:25.6px;background:#000;"></div>
<div style="left:1484px;top:521px;width:1031px;height:25.6px;background:#c0c0c0;"></div>
<span class="t m " style="left:1239.8px;top:519.72px;height:26px;line-height:26px;font-size:22.5px;color:#fff;transform:scaleX(1.065);"><span class="z">0000000000</span>C4FBD8</span>
<span class="t m " style="left:1497.8px;top:519.72px;height:26px;line-height:26px;font-size:22.5px;color:#000000;transform:scaleX(1.065);"><span class="z">0000</span>7FFD19D7226<span class="z">0</span></span>
<span class="t m " style="left:1762.4px;top:519.72px;height:26px;line-height:26px;font-size:22.5px;color:#ff0000;transform:scaleX(1.065);">return to ntdll.TppWorkpExecuteCallback+13<span class="z">0</span> from ???</span>
<span class="t m " style="left:1239.8px;top:545.72px;height:26px;line-height:26px;font-size:22.5px;color:#808080;transform:scaleX(1.065);"><span class="z">0000000000</span>C4FBE<span class="z">0</span></span>
<span class="t m " style="left:1497.8px;top:545.72px;height:26px;line-height:26px;font-size:22.5px;color:#000000;transform:scaleX(1.065);"><span class="z">0000000000</span>7563A<span class="z">0</span></span>
<span class="t m " style="left:1239.8px;top:571.72px;height:26px;line-height:26px;font-size:22.5px;color:#808080;transform:scaleX(1.065);"><span class="z">0000000000</span>C4FBE8</span>
<span class="t m " style="left:1497.8px;top:571.72px;height:26px;line-height:26px;font-size:22.5px;color:#000000;transform:scaleX(1.065);"><span class="z">0000000000000000</span></span>
<span class="t m " style="left:1239.8px;top:597.72px;height:26px;line-height:26px;font-size:22.5px;color:#808080;transform:scaleX(1.065);"><span class="z">0000000000</span>C4FBF<span class="z">0</span></span>
<span class="t m " style="left:1497.8px;top:597.72px;height:26px;line-height:26px;font-size:22.5px;color:#000000;transform:scaleX(1.065);"><span class="z">0000000000</span>756468</span>
<span class="t m " style="left:1239.8px;top:623.72px;height:26px;line-height:26px;font-size:22.5px;color:#808080;transform:scaleX(1.065);"><span class="z">0000000000</span>C4FBF8</span>
<span class="t m " style="left:1497.8px;top:623.72px;height:26px;line-height:26px;font-size:22.5px;color:#000000;transform:scaleX(1.065);"><span class="z">0000000000</span>75<span class="z">0</span>BC<span class="z">0</span></span>
<span class="t m " style="left:1239.8px;top:649.72px;height:26px;line-height:26px;font-size:22.5px;color:#808080;transform:scaleX(1.065);"><span class="z">0000000000</span>C4FC<span class="z">00</span></span>
<span class="t m " style="left:1497.8px;top:649.72px;height:26px;line-height:26px;font-size:22.5px;color:#000000;transform:scaleX(1.065);"><span class="z">000000000000</span>3<span class="z">000</span></span>
<span class="t m " style="left:1239.8px;top:675.72px;height:26px;line-height:26px;font-size:22.5px;color:#808080;transform:scaleX(1.065);"><span class="z">0000000000</span>C4FC<span class="z">0</span>8</span>
<span class="t m " style="left:1497.8px;top:675.72px;height:26px;line-height:26px;font-size:22.5px;color:#000000;transform:scaleX(1.065);"><span class="z">00000000000000</span>2<span class="z">0</span></span>
<span class="t m " style="left:1239.8px;top:701.72px;height:26px;line-height:26px;font-size:22.5px;color:#808080;transform:scaleX(1.065);"><span class="z">0000000000</span>C4FC1<span class="z">0</span></span>
<span class="t m " style="left:1497.8px;top:701.72px;height:26px;line-height:26px;font-size:22.5px;color:#000000;transform:scaleX(1.065);"><span class="z">0000000000000000</span></span>
<span class="t m " style="left:1239.8px;top:727.72px;height:26px;line-height:26px;font-size:22.5px;color:#808080;transform:scaleX(1.065);"><span class="z">0000000000</span>C4FC18</span>
<span class="t m " style="left:1497.8px;top:727.72px;height:26px;line-height:26px;font-size:22.5px;color:#000000;transform:scaleX(1.065);"><span class="z">0000000000000000</span></span>
<span class="t m " style="left:1239.8px;top:753.72px;height:26px;line-height:26px;font-size:22.5px;color:#808080;transform:scaleX(1.065);"><span class="z">0000000000</span>C4FC2<span class="z">0</span></span>
<span class="t m " style="left:1497.8px;top:753.72px;height:26px;line-height:26px;font-size:22.5px;color:#000000;transform:scaleX(1.065);"><span class="z">0000000000000000</span></span>
<span class="t m " style="left:1239.8px;top:779.72px;height:26px;line-height:26px;font-size:22.5px;color:#808080;transform:scaleX(1.065);"><span class="z">0000000000</span>C4FC28</span>
<span class="t m " style="left:1497.8px;top:779.72px;height:26px;line-height:26px;font-size:22.5px;color:#000000;transform:scaleX(1.065);"><span class="z">0000</span>7FFD19D631AA</span>
<span class="t m " style="left:1762.4px;top:779.72px;height:26px;line-height:26px;font-size:22.5px;color:#ff0000;transform:scaleX(1.065);">return to ntdll.TppWorkerThread+68A from ???</span>
<div style="left:1481px;top:521px;width:2px;height:290px;background:#8a8a8a;"></div>
<div style="left:1751px;top:521px;width:2px;height:290px;background:#8a8a8a;"></div>
<div style="left:1486.6px;top:526.6px;width:3.4px;height:246.6px;background:#0000ff;"></div>
<div style="left:1486.6px;top:526.6px;width:9px;height:3.2px;background:#0000ff;"></div>
<div style="left:1486.6px;top:770px;width:9px;height:3.2px;background:#0000ff;"></div>
<div style="left:1486.6px;top:787px;width:3.4px;height:20px;background:#0000ff;"></div>
<div style="left:1486.6px;top:787px;width:9px;height:3.2px;background:#0000ff;"></div>
<div style="left:2516px;top:521px;width:4px;height:290px;background:#f0f0f0;"></div>
<div style="left:2516.6px;top:617px;width:3.4px;height:30px;background:#c4c4c4;"></div>
<div style="left:749.6px;top:46.6px;width:451.8px;height:245px;background:rgba(36,30,228,0.29);border:2px solid #ff0000;"></div>
<div style="left:1691.8px;top:141px;width:238.8px;height:49.4px;background:rgba(36,30,228,0.29);border:2px solid #ff0000;"></div>
<div style="left:1694.4px;top:309.8px;width:237.4px;height:50.4px;background:rgba(36,30,228,0.29);border:2px solid #ff0000;"></div>
<div style="left:239.4px;top:596.8px;width:674px;height:76.6px;background:rgba(36,30,228,0.29);border:2px solid #ff0000;"></div>
<div style="left:1493.4px;top:548.2px;width:239.6px;height:99.2px;background:rgba(36,30,228,0.29);border:2px solid #ff0000;"></div>
<div style="left:1494.2px;top:652.4px;width:248px;height:50.2px;background:rgba(36,30,228,0.29);border:2px solid #ff0000;"></div>
<span class="t s " style="left:1214.1px;top:146.31px;height:26px;line-height:26px;font-size:20.5px;color:#ff0000;transform:scaleX(1.03818);">WorkCallback</span>
<span class="t s " style="left:1214.1px;top:171.91px;height:26px;line-height:26px;font-size:20.5px;color:#ff0000;transform:scaleX(1.0383);">ASM Code</span>
<span class="t s " style="left:2013.4px;top:140.71px;height:26px;line-height:26px;font-size:20.5px;color:#ff0000;transform:scaleX(1.03863);">Handle to current process (-1)</span>
<span class="t s " style="left:2014.1px;top:166.91px;height:26px;line-height:26px;font-size:20.5px;color:#ff0000;transform:scaleX(1.0463);">Pointer to Null pointer for memory allocation</span>
<span class="t s " style="left:2022.1px;top:307.31px;height:26px;line-height:26px;font-size:20.5px;color:#ff0000;transform:scaleX(1.04382);">ULONG_PTR ZeroBits</span>
<span class="t s " style="left:2024.9px;top:334.31px;height:26px;line-height:26px;font-size:20.5px;color:#ff0000;transform:scaleX(1.04765);">PSIZE_T RegionSize</span>
<span class="t s " style="left:1757.3px;top:585.81px;height:26px;line-height:26px;font-size:20.5px;color:#ff0000;transform:scaleX(1.04769);">Homing Space for 4 registers</span>
<span class="t s " style="left:1764.4px;top:647.71px;height:26px;line-height:26px;font-size:20.5px;color:#ff0000;transform:scaleX(1.0397);">ULONG AllocationType - MEM_COMMIT|MEM_RESERVE</span>
<span class="t s " style="left:1766.6px;top:675.51px;height:26px;line-height:26px;font-size:20.5px;color:#ff0000;transform:scaleX(1.03571);">ULONG Protect - PAGE_EXECUTE_READ</span>
<span class="t s " style="left:6.1px;top:469.73px;height:26px;line-height:26px;font-size:19px;color:#ff0000;transform:scaleX(1.12739);font-weight:bold;">_NTALLOCATEVIRTUALMEMORY_ARGS struct Memory</span>
<span class="t s " style="left:6.1px;top:495.03px;height:26px;line-height:26px;font-size:19px;color:#ff0000;transform:scaleX(1.11451);font-weight:bold;">block</span>
<svg width="2520" height="805" viewBox="0 0 2520 805"><path d="M872.0 276.5L1603.4 106.9" stroke="#ff0000" stroke-width="2" fill="none"/><path d="M1609.8 105.4L1600.0 112.0L1602.1 107.2L1598.1 103.8Z" fill="#ff0000"/><path d="M1697.4 154.3L672.2 587.7" stroke="#ff0000" stroke-width="2" fill="none"/><path d="M666.1 590.3L674.6 582.1L673.4 587.2L677.9 589.9Z" fill="#ff0000"/><path d="M1695.0 182.5L347.7 617.9" stroke="#ff0000" stroke-width="2" fill="none"/><path d="M341.4 619.9L350.6 612.5L348.9 617.5L353.2 620.5Z" fill="#ff0000"/><path d="M1491.0 691.0L420.8 660.2" stroke="#ff0000" stroke-width="2" fill="none"/><path d="M414.2 660.0L425.3 656.1L422.1 660.2L425.1 664.5Z" fill="#ff0000"/><path d="M282.0 511.5L301.0 579.4" stroke="#ff0000" stroke-width="2" fill="none"/><path d="M302.8 585.8L295.8 576.3L300.7 578.2L303.9 574.1Z" fill="#ff0000"/><path d="M1931.0 152.9L1998.4 153.2" stroke="#ff0000" stroke-width="2" fill="none"/><path d="M2004.4 153.2L1994.4 157.4L1997.2 153.2L1994.4 149.0Z" fill="#ff0000"/><path d="M1931.0 180.4L1998.4 180.8" stroke="#ff0000" stroke-width="2" fill="none"/><path d="M2004.4 180.8L1994.4 184.9L1997.2 180.8L1994.4 176.5Z" fill="#ff0000"/><path d="M1932.0 319.8L2008.0 319.6" stroke="#ff0000" stroke-width="2" fill="none"/><path d="M2014.0 319.6L2004.0 323.8L2006.8 319.6L2004.0 315.4Z" fill="#ff0000"/><path d="M1932.0 347.2L2008.0 347.0" stroke="#ff0000" stroke-width="2" fill="none"/><path d="M2014.0 347.0L2004.0 351.2L2006.8 347.0L2004.0 342.8Z" fill="#ff0000"/><path d="M1745.0 662.6L1759.0 662.3" stroke="#ff0000" stroke-width="2" fill="none"/><path d="M1764.4 662.2L1755.5 666.0L1757.9 662.3L1755.3 658.8Z" fill="#ff0000"/><path d="M1742.0 692.0L1756.8 690.5" stroke="#ff0000" stroke-width="2" fill="none"/><path d="M1762.2 690.0L1753.6 694.5L1755.8 690.6L1752.9 687.3Z" fill="#ff0000"/></svg>
</div></body></html>
